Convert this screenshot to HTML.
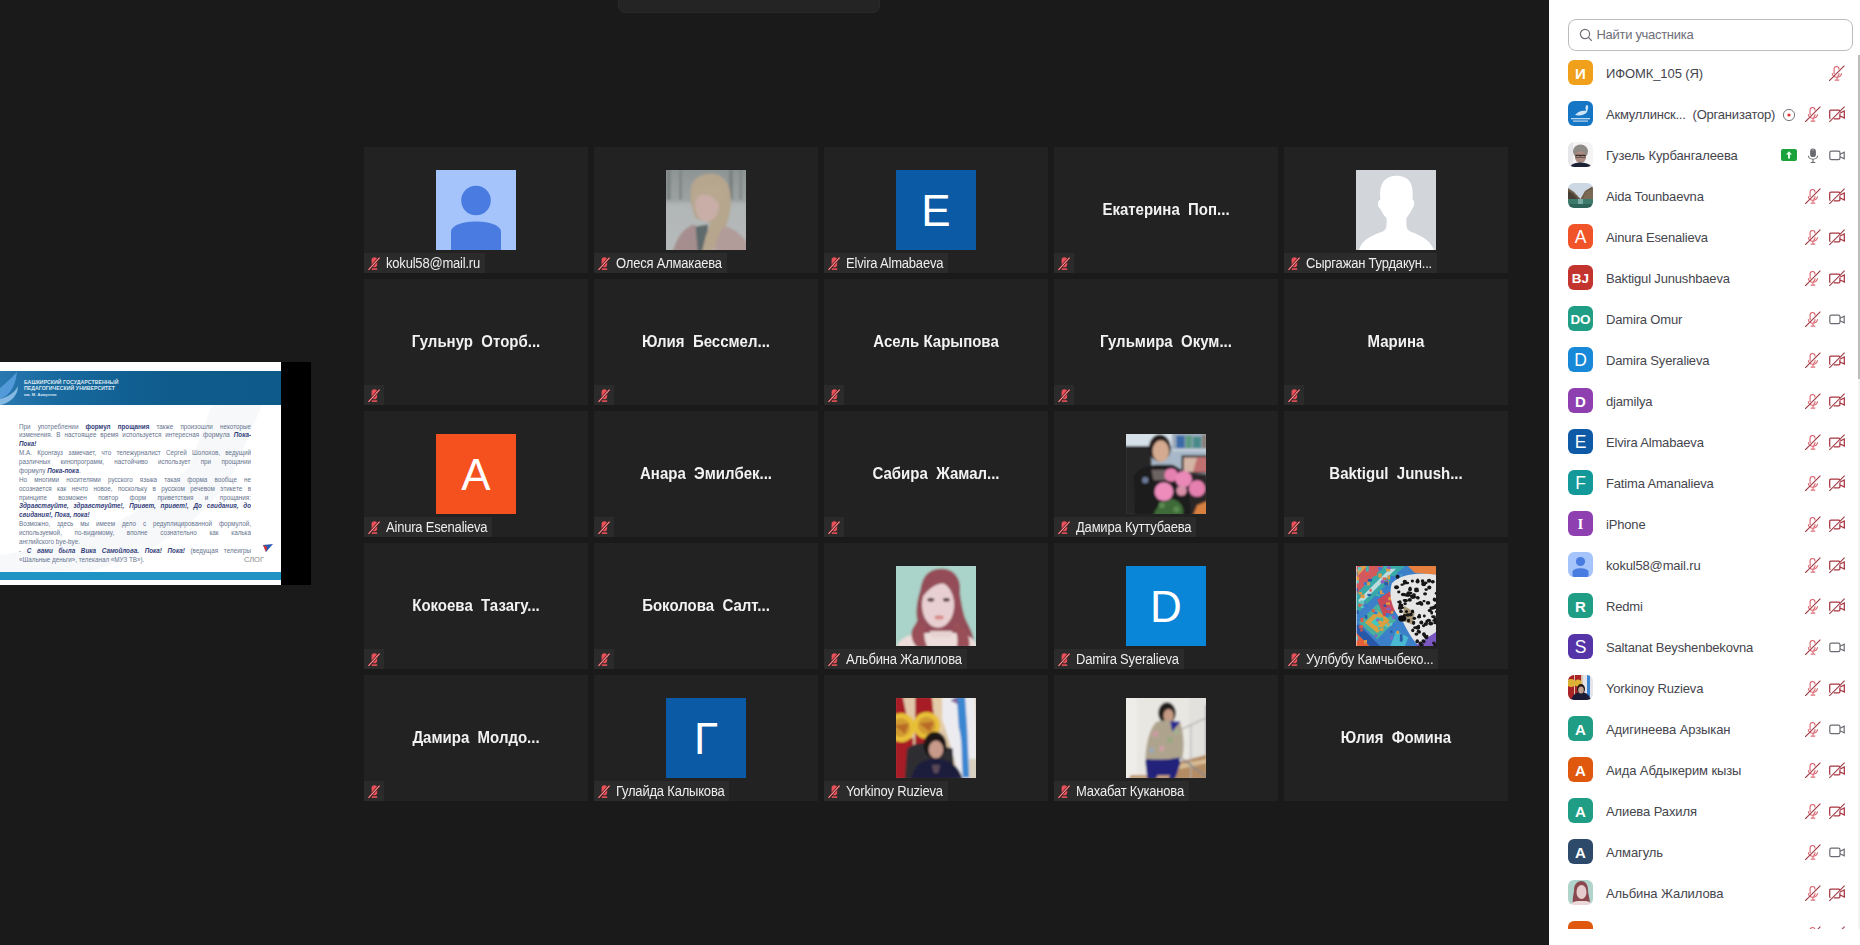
<!DOCTYPE html>
<html><head><meta charset="utf-8"><style>
*{margin:0;padding:0;box-sizing:border-box}
html,body{width:1860px;height:945px;overflow:hidden;background:#1a1a1a;font-family:"Liberation Sans",sans-serif}
.topbar{position:absolute;left:618px;top:-8px;width:262px;height:21px;border-radius:7px;background:#242424;border:1px solid #2a2a2a}
.tile{position:absolute;width:224px;height:126px;background:#222222}
.av{position:absolute;left:72px;top:23px;width:80px;height:80px;overflow:hidden;display:flex;align-items:center;justify-content:center;color:#fff}
.av span{line-height:1;margin-top:1px}
.lab{position:absolute;left:0;top:106px;height:20px;background:#2b2b2b;padding:0 5px 0 22px;display:flex;align-items:center}
.lab0{width:20px;padding:0}
.tmic{position:absolute;left:3px;top:3px}
.ln{color:#eeeeee;font-size:13px;letter-spacing:-0.2px;white-space:nowrap;position:relative;top:0px;display:inline-block;transform:scaleY(1.07);transform-origin:50% 70%}
.bn{position:absolute;left:0;top:0;width:224px;height:126px;display:flex;align-items:center;justify-content:center;color:#f2f2f2;font-weight:bold;font-size:15px;letter-spacing:0px;white-space:nowrap;padding-bottom:1px;transform:scaleY(1.06)}
.panel{position:absolute;left:1549px;top:0;width:311px;height:945px;background:#ffffff}
.search{position:absolute;left:19px;top:19px;width:285px;height:32px;border:1px solid #bcbcc0;border-radius:8px}
.search svg{position:absolute;left:10px;top:8px}
.search span{position:absolute;left:27.5px;top:7px;font-size:13px;letter-spacing:-0.3px;color:#6e6e78}
.list{position:absolute;left:0;top:52px;width:311px;height:877px;overflow:hidden}
.prow{position:absolute;left:19px;width:290px;height:25px;margin-top:-52px}
.pav{position:absolute;left:0;top:0;width:25px;height:25px;border-radius:6px;display:flex;align-items:center;justify-content:center;color:#fff;overflow:hidden}
.pav span{position:relative;top:0.5px}
.pname{position:absolute;left:38px;top:5.5px;font-size:13px;color:#45454d;white-space:nowrap}
.ic{position:absolute;top:5px}
.ic svg{display:block}
.sbar{position:absolute;left:1858px;top:55px;width:2px;height:324px;background:#bcbcbc}
.sbtrack{position:absolute;left:1858px;top:55px;width:2px;height:874px;background:#f4f4f4}
.share{position:absolute;left:0;top:362px;width:311px;height:223px;background:#000}
.slide{position:absolute;left:0;top:0;width:281px;height:223px;background:#fff;overflow:hidden}
.shead{position:absolute;left:0;top:9px;width:281px;height:34px;background:linear-gradient(90deg,#2a78b0 0%,#17699e 20%,#0f5b8c 60%,#0e5a8a 100%)}
.slogo{position:absolute;left:0;top:8px}
.sht{position:absolute;left:24px;color:#dce8f2;font-size:5.2px;line-height:5px;font-weight:bold;white-space:nowrap;letter-spacing:0.05px}
.sln{position:absolute;left:19px;width:232px;font-size:6.3px;line-height:8px;color:#66748f;white-space:nowrap;overflow:hidden}
.sln.j{text-align:justify;text-align-last:justify;white-space:normal;height:8px}
.sln b{color:#33407a}
.stri{position:absolute;left:263px;top:182px}
.slog{position:absolute;left:244px;top:193px;font-size:7.5px;color:#8a8a8a}
.sfoot{position:absolute;left:0;top:210px;width:281px;height:8px;background:#1f94c4}

#p_default{background:#d5d7db}
#p_olesya{background:linear-gradient(180deg,#8a8a88 0%,#a9a9a6 35%,#b6b4b0 60%,#b8a7a2 100%)}
#p_damira{background:linear-gradient(180deg,#c8d4da 0%,#5a6068 30%,#3a3234 60%,#4a3a3c 100%)}
#p_albina{background:#a8d4c8}
#p_ulbubu{background:#6f8aa0}
#p_yorkinoy{background:linear-gradient(90deg,#b0282a 0%,#c03a2a 45%,#e8e8f0 70%,#6080c0 85%,#d8d8e0 100%)}
#p_mahabat{background:linear-gradient(90deg,#e4e2dc 0%,#ebe9e5 60%,#d8d4cc 100%)}
#img_akm{background:#1573c0}
#img_guzel{background:#c4c0bc}
#img_aida{background:linear-gradient(180deg,#b8c8d8 0%,#7a6e5e 45%,#3e7e72 70%,#2d5e58 100%)}
#img_person{background:#a4c4fb}
#img_york{background:#8a3030}
#img_albina{background:#a8ccc4}
</style></head>
<body>
<svg width="0" height="0" style="position:absolute"><defs><filter id="phb" x="-10%" y="-10%" width="120%" height="120%"><feGaussianBlur stdDeviation="0.7"/></filter><filter id="phb2" x="-10%" y="-10%" width="120%" height="120%"><feGaussianBlur stdDeviation="0.35"/></filter></defs></svg>
<div class="topbar"></div>
<div class="share"><div class="slide"><svg style="position:absolute;left:0;top:43px" width="281" height="167" viewBox="0 0 281 167"><path d="M212 0 L262 0 L232 70 C200 120 150 150 90 166 L0 167 L0 150 C80 140 150 110 190 60 Z" fill="#eef1f6" opacity="0.5"/></svg><div class="shead"></div><svg class="slogo" width="22" height="36" viewBox="0 0 22 36"><path d="M-4 22 C4 14 12 8 17 2 C16 10 14 18 8 24 C4 28 -2 30 -4 30 Z" fill="#5aa0e0" opacity="0.85"/><path d="M-4 30 C6 28 14 24 18 16 C18 26 10 34 -4 36 Z" fill="#9ccaf0" opacity="0.8"/></svg><div class="sht" style="top:18px">БАШКИРСКИЙ ГОСУДАРСТВЕННЫЙ</div><div class="sht" style="top:24px">ПЕДАГОГИЧЕСКИЙ УНИВЕРСИТЕТ</div><div class="sht" style="top:30px;font-size:4px">им. М. Акмуллы</div><div class="sln j" style="top:60.5px">При употреблении <b>формул прощания</b> также произошли некоторые</div><div class="sln j" style="top:69.4px">изменения. В настоящее время используется интересная формула <b><i>Пока-</i></b></div><div class="sln" style="top:78.2px"><b><i>Пока!</i></b></div><div class="sln j" style="top:87.1px">М.А. Кронгауз замечает, что тележурналист Сергей Шолохов, ведущий</div><div class="sln j" style="top:96.0px">различных кинопрограмм, настойчиво использует при прощании</div><div class="sln" style="top:104.8px">формулу <b><i>Пока-пока</i></b>.</div><div class="sln j" style="top:113.7px">Но многими носителями русского языка такая форма вообще не</div><div class="sln j" style="top:122.6px">осознается как нечто новое, поскольку в русском речевом этикете в</div><div class="sln j" style="top:131.5px">принципе возможен повтор форм приветствия и прощания:</div><div class="sln j" style="top:140.3px"><b><i>Здравствуйте, здравствуйте!, Привет, привет!, До свидания, до</i></b></div><div class="sln" style="top:149.2px"><b><i>свидания!, Пока, пока!</i></b></div><div class="sln j" style="top:158.1px">Возможно, здесь мы имеем дело с редуплицированной формулой,</div><div class="sln j" style="top:166.9px">используемой, по-видимому, вполне сознательно как калька</div><div class="sln" style="top:175.8px">английского bye-bye.</div><div class="sln j" style="top:184.7px">- <b><i>С вами была Вика Самойлова. Пока! Пока!</i></b> (ведущая телеигры</div><div class="sln" style="top:193.5px">«Шальные деньги», телеканал «МУЗ ТВ»).</div><svg class="stri" width="10" height="9" viewBox="0 0 10 9"><path d="M0 1 L10 0 L3 8 Z" fill="#2a5bb0"/><path d="M0 1 L4 3 L3 8 Z" fill="#e03030"/></svg><div class="slog">СЛОГ</div><div class="sfoot"></div></div></div>
<div class="tile" style="left:364px;top:147px"><div class="av" style="background:#a4c4fb"><svg width="80" height="80" viewBox="0 0 80 80"><circle cx="40" cy="30.5" r="14.8" fill="#4a7be0"/><path d="M15 80 V62 C15 48 65 48 65 62 V80 Z" fill="#4a7be0"/></svg></div><div class="lab"><svg class="tmic" width="14" height="15" viewBox="0 0 14 15"><rect x="4.6" y="1.2" width="5.6" height="10" rx="2.8" fill="#e9505a"/><rect x="4.8" y="12.3" width="5.4" height="1.6" fill="#e9505a"/><line x1="1.5" y1="13.8" x2="12.6" y2="1.6" stroke="#5a1414" stroke-width="2.6"/><line x1="1.5" y1="13.8" x2="12.6" y2="1.6" stroke="#f09aa0" stroke-width="1.1"/></svg><span class="ln">kokul58@mail.ru</span></div></div><div class="tile" style="left:594px;top:147px"><div class="av ph"><svg width="80" height="80" viewBox="0 0 80 80" preserveAspectRatio="none"><defs><filter id="fb9" x="-10%" y="-10%" width="120%" height="120%"><feGaussianBlur stdDeviation="1.0"/></filter></defs><rect width="80" height="80" fill="#7e8484"/><g filter="url(#fb9)" transform="translate(-1.5 -1.5) scale(1.0375)"><defs><linearGradient id="og" x1="0" y1="0" x2="0" y2="1"><stop offset="0" stop-color="#8e9494"/><stop offset="0.38" stop-color="#9ca2a2"/><stop offset="0.44" stop-color="#b2b6b6"/><stop offset="1" stop-color="#b6baba"/></linearGradient></defs>
<rect width="80" height="80" fill="url(#og)"/>
<rect x="2" y="0" width="4" height="30" fill="#7e8484"/><rect x="14" y="0" width="3" height="30" fill="#828888"/><rect x="62" y="0" width="4" height="30" fill="#7c8282"/><rect x="72" y="0" width="3" height="30" fill="#848a8a"/>
<path d="M25 24 C25 10 34 5 46 5 C58 6 64 16 64 30 C64 44 60 56 54 68 L46 80 L34 80 C38 70 42 62 44 52 L30 48 C27 40 25 32 25 24 Z" fill="#b6a68e"/>
<ellipse cx="41" cy="36" rx="11.5" ry="15" fill="#c8aea6"/>
<path d="M27 26 C30 16 42 12 56 18 C58 26 56 32 52 34 C46 24 36 22 28 30 Z" fill="#b8a890"/>
<path d="M8 80 C12 66 18 58 28 54 L34 60 C38 66 40 74 38 80 Z" fill="#a68e8e"/>
<path d="M48 80 C50 70 52 62 58 56 C68 58 74 64 80 72 L80 80 Z" fill="#b29c9a"/>
<path d="M30 56 L42 54 L40 80 L32 80 Z" fill="#5e6a6c"/>
<path d="M40 64 C44 56 48 52 54 48 L52 60 L44 80 L36 80 Z" fill="#b6a68e"/></g></svg></div><div class="lab"><svg class="tmic" width="14" height="15" viewBox="0 0 14 15"><rect x="4.6" y="1.2" width="5.6" height="10" rx="2.8" fill="#e9505a"/><rect x="4.8" y="12.3" width="5.4" height="1.6" fill="#e9505a"/><line x1="1.5" y1="13.8" x2="12.6" y2="1.6" stroke="#5a1414" stroke-width="2.6"/><line x1="1.5" y1="13.8" x2="12.6" y2="1.6" stroke="#f09aa0" stroke-width="1.1"/></svg><span class="ln">Олеся Алмакаева</span></div></div><div class="tile" style="left:824px;top:147px"><div class="av" style="background:#0b5aa5"><span style="font-size:44px">E</span></div><div class="lab"><svg class="tmic" width="14" height="15" viewBox="0 0 14 15"><rect x="4.6" y="1.2" width="5.6" height="10" rx="2.8" fill="#e9505a"/><rect x="4.8" y="12.3" width="5.4" height="1.6" fill="#e9505a"/><line x1="1.5" y1="13.8" x2="12.6" y2="1.6" stroke="#5a1414" stroke-width="2.6"/><line x1="1.5" y1="13.8" x2="12.6" y2="1.6" stroke="#f09aa0" stroke-width="1.1"/></svg><span class="ln">Elvira Almabaeva</span></div></div><div class="tile" style="left:1054px;top:147px"><div class="bn">Екатерина&nbsp; Поп...</div><div class="lab lab0"><svg class="tmic" width="14" height="15" viewBox="0 0 14 15"><rect x="4.6" y="1.2" width="5.6" height="10" rx="2.8" fill="#e9505a"/><rect x="4.8" y="12.3" width="5.4" height="1.6" fill="#e9505a"/><line x1="1.5" y1="13.8" x2="12.6" y2="1.6" stroke="#5a1414" stroke-width="2.6"/><line x1="1.5" y1="13.8" x2="12.6" y2="1.6" stroke="#f09aa0" stroke-width="1.1"/></svg></div></div><div class="tile" style="left:1284px;top:147px"><div class="av ph"><svg width="80" height="80" viewBox="0 0 80 80" preserveAspectRatio="none"><defs><filter id="fb1" x="-10%" y="-10%" width="120%" height="120%"><feGaussianBlur stdDeviation="0.35"/></filter></defs><rect width="80" height="80" fill="#d2d5da"/><g filter="url(#fb1)" transform="translate(-1.5 -1.5) scale(1.0375)"><rect width="80" height="80" fill="#d2d5da"/><path d="M4 80 C6 70 14 66 24 62 C30 60 31 58 31 52 L31 48 C27 44 26 40 24 38 C22 36 22 30 25 30 C24 18 26 8 40 7 C54 7 57 16 56 30 C58 30 58 36 56 38 C55 40 53 44 50 48 L50 52 C50 58 51 60 57 62 C66 66 74 70 77 80 Z" fill="#ffffff"/></g></svg></div><div class="lab"><svg class="tmic" width="14" height="15" viewBox="0 0 14 15"><rect x="4.6" y="1.2" width="5.6" height="10" rx="2.8" fill="#e9505a"/><rect x="4.8" y="12.3" width="5.4" height="1.6" fill="#e9505a"/><line x1="1.5" y1="13.8" x2="12.6" y2="1.6" stroke="#5a1414" stroke-width="2.6"/><line x1="1.5" y1="13.8" x2="12.6" y2="1.6" stroke="#f09aa0" stroke-width="1.1"/></svg><span class="ln">Сыргажан Турдакун...</span></div></div><div class="tile" style="left:364px;top:279px"><div class="bn">Гульнур&nbsp; Оторб...</div><div class="lab lab0"><svg class="tmic" width="14" height="15" viewBox="0 0 14 15"><rect x="4.6" y="1.2" width="5.6" height="10" rx="2.8" fill="#e9505a"/><rect x="4.8" y="12.3" width="5.4" height="1.6" fill="#e9505a"/><line x1="1.5" y1="13.8" x2="12.6" y2="1.6" stroke="#5a1414" stroke-width="2.6"/><line x1="1.5" y1="13.8" x2="12.6" y2="1.6" stroke="#f09aa0" stroke-width="1.1"/></svg></div></div><div class="tile" style="left:594px;top:279px"><div class="bn">Юлия&nbsp; Бессмел...</div><div class="lab lab0"><svg class="tmic" width="14" height="15" viewBox="0 0 14 15"><rect x="4.6" y="1.2" width="5.6" height="10" rx="2.8" fill="#e9505a"/><rect x="4.8" y="12.3" width="5.4" height="1.6" fill="#e9505a"/><line x1="1.5" y1="13.8" x2="12.6" y2="1.6" stroke="#5a1414" stroke-width="2.6"/><line x1="1.5" y1="13.8" x2="12.6" y2="1.6" stroke="#f09aa0" stroke-width="1.1"/></svg></div></div><div class="tile" style="left:824px;top:279px"><div class="bn">Асель Карыпова</div><div class="lab lab0"><svg class="tmic" width="14" height="15" viewBox="0 0 14 15"><rect x="4.6" y="1.2" width="5.6" height="10" rx="2.8" fill="#e9505a"/><rect x="4.8" y="12.3" width="5.4" height="1.6" fill="#e9505a"/><line x1="1.5" y1="13.8" x2="12.6" y2="1.6" stroke="#5a1414" stroke-width="2.6"/><line x1="1.5" y1="13.8" x2="12.6" y2="1.6" stroke="#f09aa0" stroke-width="1.1"/></svg></div></div><div class="tile" style="left:1054px;top:279px"><div class="bn">Гульмира&nbsp; Окум...</div><div class="lab lab0"><svg class="tmic" width="14" height="15" viewBox="0 0 14 15"><rect x="4.6" y="1.2" width="5.6" height="10" rx="2.8" fill="#e9505a"/><rect x="4.8" y="12.3" width="5.4" height="1.6" fill="#e9505a"/><line x1="1.5" y1="13.8" x2="12.6" y2="1.6" stroke="#5a1414" stroke-width="2.6"/><line x1="1.5" y1="13.8" x2="12.6" y2="1.6" stroke="#f09aa0" stroke-width="1.1"/></svg></div></div><div class="tile" style="left:1284px;top:279px"><div class="bn">Марина</div><div class="lab lab0"><svg class="tmic" width="14" height="15" viewBox="0 0 14 15"><rect x="4.6" y="1.2" width="5.6" height="10" rx="2.8" fill="#e9505a"/><rect x="4.8" y="12.3" width="5.4" height="1.6" fill="#e9505a"/><line x1="1.5" y1="13.8" x2="12.6" y2="1.6" stroke="#5a1414" stroke-width="2.6"/><line x1="1.5" y1="13.8" x2="12.6" y2="1.6" stroke="#f09aa0" stroke-width="1.1"/></svg></div></div><div class="tile" style="left:364px;top:411px"><div class="av" style="background:#f4511e"><span style="font-size:44px">A</span></div><div class="lab"><svg class="tmic" width="14" height="15" viewBox="0 0 14 15"><rect x="4.6" y="1.2" width="5.6" height="10" rx="2.8" fill="#e9505a"/><rect x="4.8" y="12.3" width="5.4" height="1.6" fill="#e9505a"/><line x1="1.5" y1="13.8" x2="12.6" y2="1.6" stroke="#5a1414" stroke-width="2.6"/><line x1="1.5" y1="13.8" x2="12.6" y2="1.6" stroke="#f09aa0" stroke-width="1.1"/></svg><span class="ln">Ainura Esenalieva</span></div></div><div class="tile" style="left:594px;top:411px"><div class="bn">Анара&nbsp; Эмилбек...</div><div class="lab lab0"><svg class="tmic" width="14" height="15" viewBox="0 0 14 15"><rect x="4.6" y="1.2" width="5.6" height="10" rx="2.8" fill="#e9505a"/><rect x="4.8" y="12.3" width="5.4" height="1.6" fill="#e9505a"/><line x1="1.5" y1="13.8" x2="12.6" y2="1.6" stroke="#5a1414" stroke-width="2.6"/><line x1="1.5" y1="13.8" x2="12.6" y2="1.6" stroke="#f09aa0" stroke-width="1.1"/></svg></div></div><div class="tile" style="left:824px;top:411px"><div class="bn">Сабира&nbsp; Жамал...</div><div class="lab lab0"><svg class="tmic" width="14" height="15" viewBox="0 0 14 15"><rect x="4.6" y="1.2" width="5.6" height="10" rx="2.8" fill="#e9505a"/><rect x="4.8" y="12.3" width="5.4" height="1.6" fill="#e9505a"/><line x1="1.5" y1="13.8" x2="12.6" y2="1.6" stroke="#5a1414" stroke-width="2.6"/><line x1="1.5" y1="13.8" x2="12.6" y2="1.6" stroke="#f09aa0" stroke-width="1.1"/></svg></div></div><div class="tile" style="left:1054px;top:411px"><div class="av ph"><svg width="80" height="80" viewBox="0 0 80 80" preserveAspectRatio="none"><defs><filter id="fb3" x="-10%" y="-10%" width="120%" height="120%"><feGaussianBlur stdDeviation="1.0"/></filter></defs><rect width="80" height="80" fill="#a8b8c8"/><g filter="url(#fb3)" transform="translate(-1.5 -1.5) scale(1.0375)"><rect width="80" height="80" fill="#a8b8c8"/>
<rect x="0" y="0" width="46" height="13" fill="#d6e0e8"/>
<rect x="46" y="0" width="34" height="16" fill="#9cacbc"/>
<rect x="50" y="3" width="8" height="12" fill="#3a6aa8"/><rect x="59" y="3" width="6" height="12" fill="#5a9a80"/><rect x="66" y="4" width="8" height="11" fill="#4a8a8a"/><rect x="75" y="2" width="4" height="13" fill="#8a7a70"/>
<rect x="46" y="16" width="34" height="2" fill="#c8d2dc"/>
<rect x="55" y="22" width="25" height="17" fill="#2a2a2e"/><rect x="57" y="24" width="23" height="14" fill="#d4b4a4"/><path d="M70 24 L80 24 L80 38 L66 38 Z" fill="#c07070"/>
<path d="M0 13 L26 13 L26 80 L0 80 Z" fill="#262628"/>
<path d="M48 38 L80 40 L80 80 L48 80 Z" fill="#2a2628"/>
<path d="M10 80 L9 42 C14 34 22 32 30 31 L46 31 C54 34 60 40 62 50 L64 80 Z" fill="#1c1a1e"/>
<ellipse cx="34" cy="15" rx="10.5" ry="13" fill="#241c1c"/>
<ellipse cx="35" cy="18" rx="8" ry="10.5" fill="#d4aa90"/>
<path d="M26 36 L44 36 L42 46 L28 46 Z" fill="#6e6464"/>
<circle cx="20" cy="46" r="3" fill="#6a7a9a"/>
<circle cx="45" cy="41" r="6.5" fill="#e680b0"/><circle cx="57" cy="45" r="8" fill="#ea88b8"/><circle cx="70" cy="54" r="8" fill="#e680b0"/>
<circle cx="38" cy="57" r="9" fill="#ee8cbc"/><circle cx="55" cy="56" r="5" fill="#d890a8"/>
<path d="M28 80 C30 72 36 66 46 64 C54 66 58 72 56 80 Z" fill="#3e6a38"/><circle cx="36" cy="70" r="3" fill="#5a8a50"/><circle cx="50" cy="74" r="3" fill="#5a8a50"/>
<path d="M70 70 L80 66 L80 80 L66 80 Z" fill="#d88040"/></g></svg></div><div class="lab"><svg class="tmic" width="14" height="15" viewBox="0 0 14 15"><rect x="4.6" y="1.2" width="5.6" height="10" rx="2.8" fill="#e9505a"/><rect x="4.8" y="12.3" width="5.4" height="1.6" fill="#e9505a"/><line x1="1.5" y1="13.8" x2="12.6" y2="1.6" stroke="#5a1414" stroke-width="2.6"/><line x1="1.5" y1="13.8" x2="12.6" y2="1.6" stroke="#f09aa0" stroke-width="1.1"/></svg><span class="ln">Дамира Куттубаева</span></div></div><div class="tile" style="left:1284px;top:411px"><div class="bn">Baktigul&nbsp; Junush...</div><div class="lab lab0"><svg class="tmic" width="14" height="15" viewBox="0 0 14 15"><rect x="4.6" y="1.2" width="5.6" height="10" rx="2.8" fill="#e9505a"/><rect x="4.8" y="12.3" width="5.4" height="1.6" fill="#e9505a"/><line x1="1.5" y1="13.8" x2="12.6" y2="1.6" stroke="#5a1414" stroke-width="2.6"/><line x1="1.5" y1="13.8" x2="12.6" y2="1.6" stroke="#f09aa0" stroke-width="1.1"/></svg></div></div><div class="tile" style="left:364px;top:543px"><div class="bn">Кокоева&nbsp; Тазагу...</div><div class="lab lab0"><svg class="tmic" width="14" height="15" viewBox="0 0 14 15"><rect x="4.6" y="1.2" width="5.6" height="10" rx="2.8" fill="#e9505a"/><rect x="4.8" y="12.3" width="5.4" height="1.6" fill="#e9505a"/><line x1="1.5" y1="13.8" x2="12.6" y2="1.6" stroke="#5a1414" stroke-width="2.6"/><line x1="1.5" y1="13.8" x2="12.6" y2="1.6" stroke="#f09aa0" stroke-width="1.1"/></svg></div></div><div class="tile" style="left:594px;top:543px"><div class="bn">Боколова&nbsp; Салт...</div><div class="lab lab0"><svg class="tmic" width="14" height="15" viewBox="0 0 14 15"><rect x="4.6" y="1.2" width="5.6" height="10" rx="2.8" fill="#e9505a"/><rect x="4.8" y="12.3" width="5.4" height="1.6" fill="#e9505a"/><line x1="1.5" y1="13.8" x2="12.6" y2="1.6" stroke="#5a1414" stroke-width="2.6"/><line x1="1.5" y1="13.8" x2="12.6" y2="1.6" stroke="#f09aa0" stroke-width="1.1"/></svg></div></div><div class="tile" style="left:824px;top:543px"><div class="av ph"><svg width="80" height="80" viewBox="0 0 80 80" preserveAspectRatio="none"><defs><filter id="fb8" x="-10%" y="-10%" width="120%" height="120%"><feGaussianBlur stdDeviation="1.0"/></filter></defs><rect width="80" height="80" fill="#aad3c9"/><g filter="url(#fb8)" transform="translate(-1.5 -1.5) scale(1.0375)"><rect width="80" height="80" fill="#aad3c9"/>
<path d="M18 80 C14 70 18 62 22 54 C20 44 22 34 25 24 C27 10 34 4 45 4 C58 4 65 14 63 28 C65 40 66 48 70 56 C74 64 78 72 76 80 Z" fill="#944e58"/>
<path d="M2 80 C4 72 12 68 22 66 L62 66 C72 68 78 72 80 80 Z" fill="#ecdcda"/>
<path d="M20 58 C14 64 16 74 22 80 L32 80 C28 72 28 64 30 58 Z" fill="#9a5058"/>
<path d="M60 56 C68 62 74 70 72 80 L60 80 C62 72 60 64 56 58 Z" fill="#9a5058"/>
<ellipse cx="42" cy="39" rx="15.5" ry="22" fill="#e8d0d2"/>
<path d="M27 26 C31 12 52 8 60 22 C54 16 40 15 28 30 Z" fill="#944e58"/>
<ellipse cx="35" cy="34" rx="3.4" ry="1.7" fill="#4a2a30"/><ellipse cx="50" cy="34" rx="3.4" ry="1.7" fill="#4a2a30"/>
<ellipse cx="43" cy="51" rx="4.5" ry="2" fill="#d88a88"/>
<path d="M34 64 L56 64 L54 70 L36 70 Z" fill="#e6d2d0"/></g></svg></div><div class="lab"><svg class="tmic" width="14" height="15" viewBox="0 0 14 15"><rect x="4.6" y="1.2" width="5.6" height="10" rx="2.8" fill="#e9505a"/><rect x="4.8" y="12.3" width="5.4" height="1.6" fill="#e9505a"/><line x1="1.5" y1="13.8" x2="12.6" y2="1.6" stroke="#5a1414" stroke-width="2.6"/><line x1="1.5" y1="13.8" x2="12.6" y2="1.6" stroke="#f09aa0" stroke-width="1.1"/></svg><span class="ln">Альбина Жалилова</span></div></div><div class="tile" style="left:1054px;top:543px"><div class="av" style="background:#0a86d8"><span style="font-size:44px">D</span></div><div class="lab"><svg class="tmic" width="14" height="15" viewBox="0 0 14 15"><rect x="4.6" y="1.2" width="5.6" height="10" rx="2.8" fill="#e9505a"/><rect x="4.8" y="12.3" width="5.4" height="1.6" fill="#e9505a"/><line x1="1.5" y1="13.8" x2="12.6" y2="1.6" stroke="#5a1414" stroke-width="2.6"/><line x1="1.5" y1="13.8" x2="12.6" y2="1.6" stroke="#f09aa0" stroke-width="1.1"/></svg><span class="ln">Damira Syeralieva</span></div></div><div class="tile" style="left:1284px;top:543px"><div class="av ph"><svg width="80" height="80" viewBox="0 0 80 80" preserveAspectRatio="none"><defs><filter id="fb5" x="-10%" y="-10%" width="120%" height="120%"><feGaussianBlur stdDeviation="0.45"/></filter></defs><rect width="80" height="80" fill="#3a80c8"/><g filter="url(#fb5)" transform="translate(-1.5 -1.5) scale(1.0375)"><rect width="80" height="80" fill="#3a80c8"/>
<path d="M0 0 L30 0 L0 30 Z" fill="#d05a60"/>
<path d="M0 8 L8 0 L14 0 L0 14 Z" fill="#e0a050"/>
<path d="M30 0 L50 0 L0 50 L0 30 Z" fill="#38a8a8"/>
<path d="M34 4 L40 4 L4 40 L4 34 Z" fill="#f2f2f2" opacity="0.7"/>
<path d="M4 56 L22 38 L40 54 L22 72 Z" fill="#48b0a0"/><path d="M10 56 L22 44 L34 54 L22 66 Z" fill="#d8a040"/><path d="M16 56 L22 50 L28 54 L22 60 Z" fill="#40c8c0"/>
<path d="M0 64 L16 80 L0 80 Z" fill="#e86038"/>
<path d="M0 58 L4 58 L26 80 L16 80 L0 64 Z" fill="#2a58a8"/>
<path d="M22 34 L34 26 L40 46 L28 50 Z" fill="#c84858"/>
<path d="M50 0 L80 0 L80 10 L58 8 Z" fill="#e88040"/>
<path d="M40 64 L52 70 L48 80 L34 80 Z" fill="#48b8d0"/>
<rect x="19.9" y="44.8" width="2.9" height="3.0" fill="#60c8c0"/><rect x="25.8" y="14.8" width="3.0" height="3.2" fill="#8a60c0"/><rect x="8.2" y="35.7" width="2.2" height="3.6" fill="#3a7ad0"/><rect x="30.5" y="3.4" width="3.9" height="3.3" fill="#e09a40"/><rect x="27.1" y="12.6" width="3.7" height="2.1" fill="#e05a48"/><rect x="1.6" y="70.4" width="2.1" height="2.9" fill="#8a60c0"/><rect x="19.4" y="67.4" width="2.5" height="2.6" fill="#8a60c0"/><rect x="0.2" y="6.8" width="2.6" height="4.0" fill="#2a5aa8"/><rect x="43.8" y="67.2" width="2.5" height="3.5" fill="#2a5aa8"/><rect x="22.6" y="2.4" width="3.5" height="2.8" fill="#8a60c0"/><rect x="37.2" y="30.9" width="3.7" height="2.0" fill="#e05a48"/><rect x="9.2" y="72.8" width="2.8" height="3.4" fill="#e09a40"/><rect x="18.5" y="45.3" width="3.6" height="2.5" fill="#3a7ad0"/><rect x="3.8" y="26.6" width="3.5" height="2.2" fill="#e09a40"/><rect x="10.8" y="8.1" width="2.9" height="3.0" fill="#e05a48"/><rect x="30.0" y="15.1" width="2.4" height="3.5" fill="#8a60c0"/><rect x="5.8" y="51.5" width="2.8" height="4.0" fill="#e05a48"/><rect x="0.0" y="69.1" width="3.2" height="4.0" fill="#60c8c0"/><rect x="0.9" y="15.0" width="3.2" height="3.2" fill="#60c8c0"/><rect x="1.9" y="11.7" width="2.5" height="3.5" fill="#e09a40"/><rect x="14.5" y="23.7" width="2.1" height="2.4" fill="#e05a48"/><rect x="28.0" y="1.2" width="2.7" height="2.9" fill="#40b8b0"/><rect x="25.3" y="69.3" width="3.3" height="2.6" fill="#3a7ad0"/><rect x="10.0" y="48.8" width="2.4" height="3.5" fill="#2a5aa8"/><rect x="41.4" y="15.7" width="3.8" height="3.2" fill="#e09a40"/><rect x="18.5" y="8.3" width="3.0" height="2.5" fill="#e05a48"/><rect x="32.6" y="31.3" width="3.6" height="3.2" fill="#e09a40"/><rect x="12.9" y="14.0" width="4.0" height="2.3" fill="#2a5aa8"/><rect x="21.1" y="52.3" width="3.2" height="2.6" fill="#8a60c0"/><rect x="40.4" y="16.3" width="2.1" height="2.8" fill="#e05a48"/><rect x="11.0" y="3.7" width="2.7" height="3.1" fill="#40b8b0"/><rect x="5.8" y="29.0" width="4.0" height="3.3" fill="#e09a40"/><rect x="30.4" y="46.8" width="3.2" height="3.8" fill="#3a7ad0"/><rect x="20.9" y="28.6" width="3.9" height="2.0" fill="#40b8b0"/><rect x="28.0" y="38.6" width="2.6" height="2.3" fill="#2a5aa8"/><rect x="3.2" y="36.2" width="3.5" height="3.8" fill="#40b8b0"/><rect x="32.4" y="56.3" width="3.9" height="2.7" fill="#60c8c0"/><rect x="3.7" y="37.9" width="3.7" height="2.8" fill="#e05a48"/><rect x="34.8" y="69.1" width="2.0" height="3.3" fill="#8a60c0"/><rect x="16.7" y="1.0" width="2.2" height="3.3" fill="#e05a48"/><rect x="43.7" y="70.4" width="2.7" height="3.9" fill="#2a5aa8"/><rect x="30.5" y="36.6" width="3.7" height="2.2" fill="#e09a40"/><rect x="33.0" y="2.4" width="2.2" height="2.0" fill="#8a60c0"/><rect x="42.1" y="9.0" width="3.2" height="3.8" fill="#60c8c0"/><rect x="11.3" y="0.9" width="2.3" height="3.2" fill="#40b8b0"/><rect x="22.8" y="60.3" width="3.3" height="2.9" fill="#40b8b0"/><rect x="29.3" y="15.9" width="3.6" height="3.5" fill="#e09a40"/><rect x="8.8" y="17.1" width="3.2" height="2.6" fill="#3a7ad0"/><rect x="6.0" y="39.7" width="3.8" height="2.1" fill="#60c8c0"/><rect x="2.8" y="78.4" width="2.3" height="2.9" fill="#60c8c0"/><rect x="12.1" y="17.1" width="2.8" height="3.0" fill="#e09a40"/><rect x="29.6" y="57.3" width="4.0" height="2.9" fill="#60c8c0"/><rect x="3.3" y="2.5" width="3.2" height="3.4" fill="#60c8c0"/><rect x="12.4" y="28.3" width="3.6" height="2.0" fill="#2a5aa8"/><rect x="6.0" y="36.4" width="3.5" height="2.5" fill="#e05a48"/><rect x="34.3" y="63.7" width="2.2" height="2.2" fill="#2a5aa8"/><rect x="23.6" y="51.2" width="3.9" height="3.4" fill="#40b8b0"/><rect x="8.8" y="38.0" width="3.4" height="3.5" fill="#3a7ad0"/><rect x="23.5" y="2.9" width="2.5" height="2.7" fill="#3a7ad0"/><rect x="30.7" y="41.6" width="4.0" height="2.3" fill="#8a60c0"/><rect x="37.3" y="56.0" width="2.2" height="3.9" fill="#3a7ad0"/><rect x="31.8" y="10.4" width="2.4" height="3.8" fill="#e09a40"/><rect x="0.3" y="44.0" width="3.8" height="3.6" fill="#2a5aa8"/><rect x="28.7" y="16.4" width="3.7" height="3.6" fill="#2a5aa8"/><rect x="40.7" y="9.9" width="3.8" height="4.0" fill="#3a7ad0"/><rect x="43.0" y="43.0" width="3.9" height="2.5" fill="#60c8c0"/><rect x="31.6" y="1.3" width="2.2" height="2.9" fill="#8a60c0"/><rect x="24.2" y="61.5" width="3.8" height="2.4" fill="#e09a40"/><rect x="38.2" y="34.3" width="2.3" height="2.7" fill="#e05a48"/><rect x="34.7" y="11.2" width="4.0" height="3.8" fill="#3a7ad0"/><rect x="22.8" y="54.2" width="3.9" height="3.0" fill="#e09a40"/><rect x="41.8" y="6.9" width="2.9" height="3.1" fill="#3a7ad0"/><rect x="36.6" y="44.9" width="3.0" height="3.7" fill="#3a7ad0"/><rect x="24.6" y="24.9" width="3.9" height="3.7" fill="#e09a40"/><rect x="26.8" y="24.4" width="3.9" height="3.0" fill="#3a7ad0"/><rect x="25.2" y="16.1" width="2.2" height="2.0" fill="#8a60c0"/><rect x="16.6" y="43.1" width="3.0" height="2.8" fill="#e05a48"/><rect x="35.2" y="45.0" width="2.2" height="2.3" fill="#e09a40"/><rect x="40.5" y="64.0" width="2.5" height="2.9" fill="#e09a40"/><rect x="5.6" y="34.7" width="3.9" height="3.8" fill="#60c8c0"/><rect x="23.1" y="8.7" width="3.2" height="3.9" fill="#e09a40"/><rect x="5.7" y="62.3" width="2.1" height="2.3" fill="#e05a48"/><rect x="0.5" y="22.7" width="2.7" height="3.2" fill="#2a5aa8"/><rect x="4.6" y="58.5" width="3.7" height="3.2" fill="#e05a48"/><rect x="31.6" y="56.1" width="2.0" height="3.3" fill="#e09a40"/><rect x="36.3" y="49.3" width="2.4" height="3.3" fill="#8a60c0"/>
<path d="M36 18 C46 8 64 8 80 10 L80 80 L64 80 C56 74 50 62 46 54 C38 46 32 32 36 18 Z" fill="#e6e6e6"/>
<path d="M56 80 L80 64 L80 80 Z" fill="#7a58c0"/>
<path d="M48 40 L58 46 L56 58 L46 54 Z" fill="#a89878"/>
<ellipse cx="61.1" cy="60.9" rx="2.2" ry="2.0" fill="#141414"/><ellipse cx="67.0" cy="74.3" rx="1.4" ry="1.6" fill="#141414"/><ellipse cx="77.2" cy="54.0" rx="2.3" ry="1.3" fill="#141414"/><ellipse cx="53.5" cy="24.2" rx="1.9" ry="1.7" fill="#141414"/><ellipse cx="68.3" cy="17.8" rx="2.2" ry="1.3" fill="#141414"/><ellipse cx="60.9" cy="15.4" rx="1.4" ry="1.9" fill="#141414"/><ellipse cx="40.5" cy="21.9" rx="2.4" ry="1.9" fill="#141414"/><ellipse cx="57.0" cy="56.2" rx="1.6" ry="2.0" fill="#141414"/><ellipse cx="64.5" cy="77.5" rx="2.3" ry="1.4" fill="#141414"/><ellipse cx="48.1" cy="18.3" rx="1.5" ry="1.3" fill="#141414"/><ellipse cx="46.9" cy="28.9" rx="2.2" ry="1.6" fill="#141414"/><ellipse cx="45.8" cy="41.6" rx="2.1" ry="1.2" fill="#141414"/><ellipse cx="67.5" cy="68.5" rx="1.4" ry="1.8" fill="#141414"/><ellipse cx="48.3" cy="48.8" rx="1.4" ry="1.2" fill="#141414"/><ellipse cx="76.5" cy="75.7" rx="1.7" ry="1.5" fill="#141414"/><ellipse cx="56.2" cy="63.4" rx="1.5" ry="1.8" fill="#141414"/><ellipse cx="69.9" cy="69.6" rx="1.4" ry="2.0" fill="#141414"/><ellipse cx="60.5" cy="73.9" rx="1.7" ry="1.9" fill="#141414"/><ellipse cx="57.3" cy="29.1" rx="1.7" ry="1.3" fill="#141414"/><ellipse cx="64.5" cy="79.8" rx="1.6" ry="1.2" fill="#141414"/><ellipse cx="79.3" cy="45.5" rx="1.8" ry="1.4" fill="#141414"/><ellipse cx="59.7" cy="67.1" rx="1.9" ry="1.5" fill="#141414"/><ellipse cx="71.9" cy="15.7" rx="2.1" ry="2.0" fill="#141414"/><ellipse cx="61.5" cy="64.3" rx="1.5" ry="1.5" fill="#141414"/><ellipse cx="44.7" cy="39.5" rx="2.4" ry="1.9" fill="#141414"/><ellipse cx="78.8" cy="39.6" rx="1.9" ry="1.8" fill="#141414"/><ellipse cx="54.0" cy="27.5" rx="1.8" ry="1.3" fill="#141414"/><ellipse cx="78.0" cy="52.4" rx="1.9" ry="1.5" fill="#141414"/><ellipse cx="69.1" cy="70.2" rx="1.8" ry="1.8" fill="#141414"/><ellipse cx="68.7" cy="57.4" rx="2.1" ry="1.8" fill="#141414"/><ellipse cx="44.0" cy="41.9" rx="2.2" ry="1.8" fill="#141414"/><ellipse cx="62.5" cy="49.0" rx="1.4" ry="1.6" fill="#141414"/><ellipse cx="62.4" cy="65.0" rx="1.7" ry="1.7" fill="#141414"/><ellipse cx="66.9" cy="67.3" rx="1.8" ry="1.9" fill="#141414"/><ellipse cx="73.5" cy="56.9" rx="2.4" ry="2.0" fill="#141414"/><ellipse cx="55.9" cy="45.2" rx="1.6" ry="1.9" fill="#141414"/><ellipse cx="76.9" cy="41.3" rx="2.1" ry="1.8" fill="#141414"/><ellipse cx="66.5" cy="18.7" rx="2.2" ry="1.7" fill="#141414"/><ellipse cx="63.3" cy="37.1" rx="2.0" ry="1.8" fill="#141414"/><ellipse cx="61.8" cy="59.3" rx="1.4" ry="1.3" fill="#141414"/><ellipse cx="52.1" cy="54.1" rx="1.6" ry="1.7" fill="#141414"/><ellipse cx="53.6" cy="22.7" rx="1.5" ry="1.3" fill="#141414"/><ellipse cx="45.9" cy="19.4" rx="1.6" ry="1.2" fill="#141414"/><ellipse cx="53.3" cy="34.1" rx="2.0" ry="1.7" fill="#141414"/><ellipse cx="43.9" cy="36.3" rx="1.5" ry="1.9" fill="#141414"/><ellipse cx="57.3" cy="31.1" rx="2.0" ry="2.0" fill="#141414"/><ellipse cx="70.9" cy="37.0" rx="2.2" ry="1.7" fill="#141414"/><ellipse cx="48.5" cy="16.5" rx="2.0" ry="1.7" fill="#141414"/><ellipse cx="77.9" cy="77.6" rx="2.0" ry="1.5" fill="#141414"/><ellipse cx="60.8" cy="16.4" rx="2.0" ry="1.9" fill="#141414"/><ellipse cx="48.8" cy="37.9" rx="1.6" ry="1.4" fill="#141414"/><ellipse cx="78.6" cy="34.1" rx="2.4" ry="1.9" fill="#141414"/><ellipse cx="59.8" cy="25.2" rx="2.4" ry="1.6" fill="#141414"/><ellipse cx="50.8" cy="29.6" rx="2.4" ry="1.6" fill="#141414"/><ellipse cx="44.3" cy="41.3" rx="1.5" ry="1.7" fill="#141414"/><ellipse cx="52.2" cy="27.7" rx="2.2" ry="1.9" fill="#141414"/><ellipse cx="69.1" cy="24.2" rx="1.7" ry="1.3" fill="#141414"/><ellipse cx="79.4" cy="27.7" rx="2.0" ry="1.6" fill="#141414"/><ellipse cx="62.2" cy="50.7" rx="2.1" ry="1.3" fill="#141414"/><ellipse cx="68.0" cy="28.3" rx="1.9" ry="1.5" fill="#141414"/><ellipse cx="44.8" cy="45.2" rx="1.9" ry="1.5" fill="#141414"/><ellipse cx="67.3" cy="49.7" rx="1.4" ry="1.4" fill="#141414"/><ellipse cx="74.4" cy="46.4" rx="1.4" ry="1.8" fill="#141414"/><ellipse cx="51.4" cy="48.6" rx="2.1" ry="1.7" fill="#141414"/><ellipse cx="49.3" cy="35.0" rx="2.3" ry="1.4" fill="#141414"/><ellipse cx="64.7" cy="38.0" rx="1.7" ry="1.8" fill="#141414"/><ellipse cx="75.5" cy="16.6" rx="1.9" ry="1.6" fill="#141414"/><ellipse cx="54.9" cy="30.5" rx="1.6" ry="1.7" fill="#141414"/><ellipse cx="69.6" cy="55.1" rx="1.4" ry="1.8" fill="#141414"/><ellipse cx="78.9" cy="79.9" rx="2.1" ry="1.2" fill="#141414"/><ellipse cx="72.1" cy="22.2" rx="2.0" ry="2.0" fill="#141414"/><ellipse cx="65.6" cy="16.0" rx="1.7" ry="1.9" fill="#141414"/><ellipse cx="50.7" cy="17.9" rx="2.0" ry="1.2" fill="#141414"/><ellipse cx="58.8" cy="60.9" rx="2.3" ry="1.3" fill="#141414"/><ellipse cx="51.6" cy="29.3" rx="2.0" ry="1.6" fill="#141414"/><ellipse cx="76.9" cy="33.7" rx="1.5" ry="1.8" fill="#141414"/><ellipse cx="57.7" cy="51.9" rx="1.7" ry="1.6" fill="#141414"/><ellipse cx="55.8" cy="15.9" rx="1.6" ry="1.5" fill="#141414"/><ellipse cx="66.8" cy="19.3" rx="2.1" ry="1.7" fill="#141414"/><ellipse cx="59.7" cy="23.7" rx="2.3" ry="1.6" fill="#141414"/><ellipse cx="77.6" cy="56.4" rx="1.6" ry="1.3" fill="#141414"/><ellipse cx="78.6" cy="55.2" rx="2.2" ry="1.3" fill="#141414"/><ellipse cx="61.2" cy="32.2" rx="1.6" ry="1.5" fill="#141414"/><ellipse cx="60.7" cy="31.8" rx="1.8" ry="1.3" fill="#141414"/><ellipse cx="71.6" cy="53.9" rx="2.2" ry="1.5" fill="#141414"/><ellipse cx="72.6" cy="44.3" rx="2.0" ry="1.7" fill="#141414"/><ellipse cx="67.0" cy="35.3" rx="1.5" ry="1.2" fill="#141414"/><ellipse cx="74.5" cy="41.6" rx="2.2" ry="1.2" fill="#141414"/><ellipse cx="61.0" cy="37.7" rx="1.9" ry="1.3" fill="#141414"/><ellipse cx="48.7" cy="34.5" rx="2.3" ry="1.3" fill="#141414"/><ellipse cx="42.7" cy="26.5" rx="1.6" ry="1.4" fill="#141414"/><ellipse cx="64.4" cy="55.9" rx="1.9" ry="2.0" fill="#141414"/><ellipse cx="66.5" cy="18.1" rx="1.6" ry="1.2" fill="#141414"/><ellipse cx="41.5" cy="11.8" rx="1.8" ry="2.0" fill="#141414"/><ellipse cx="48.2" cy="29.1" rx="1.9" ry="1.4" fill="#141414"/><ellipse cx="66.6" cy="59.1" rx="1.6" ry="1.4" fill="#141414"/><ellipse cx="63.6" cy="75.6" rx="2.0" ry="1.5" fill="#141414"/><ellipse cx="55.9" cy="31.9" rx="1.5" ry="1.3" fill="#141414"/><ellipse cx="74.9" cy="42.3" rx="2.3" ry="1.2" fill="#141414"/><ellipse cx="42.8" cy="36.2" rx="1.7" ry="1.2" fill="#141414"/><ellipse cx="50.1" cy="45.3" rx="1.5" ry="1.5" fill="#141414"/><ellipse cx="76.1" cy="50.3" rx="2.3" ry="1.4" fill="#141414"/><ellipse cx="54.3" cy="48.3" rx="1.8" ry="1.7" fill="#141414"/><ellipse cx="66.3" cy="73.6" rx="1.7" ry="1.6" fill="#141414"/>
<ellipse cx="46" cy="52" rx="4" ry="3" fill="#101010"/>
<rect x="0" y="0" width="2" height="80" fill="#f0f0f0"/></g></svg></div><div class="lab"><svg class="tmic" width="14" height="15" viewBox="0 0 14 15"><rect x="4.6" y="1.2" width="5.6" height="10" rx="2.8" fill="#e9505a"/><rect x="4.8" y="12.3" width="5.4" height="1.6" fill="#e9505a"/><line x1="1.5" y1="13.8" x2="12.6" y2="1.6" stroke="#5a1414" stroke-width="2.6"/><line x1="1.5" y1="13.8" x2="12.6" y2="1.6" stroke="#f09aa0" stroke-width="1.1"/></svg><span class="ln">Уулбубу Камчыбеко...</span></div></div><div class="tile" style="left:364px;top:675px"><div class="bn">Дамира&nbsp; Молдо...</div><div class="lab lab0"><svg class="tmic" width="14" height="15" viewBox="0 0 14 15"><rect x="4.6" y="1.2" width="5.6" height="10" rx="2.8" fill="#e9505a"/><rect x="4.8" y="12.3" width="5.4" height="1.6" fill="#e9505a"/><line x1="1.5" y1="13.8" x2="12.6" y2="1.6" stroke="#5a1414" stroke-width="2.6"/><line x1="1.5" y1="13.8" x2="12.6" y2="1.6" stroke="#f09aa0" stroke-width="1.1"/></svg></div></div><div class="tile" style="left:594px;top:675px"><div class="av" style="background:#0b5aa5"><span style="font-size:44px">Г</span></div><div class="lab"><svg class="tmic" width="14" height="15" viewBox="0 0 14 15"><rect x="4.6" y="1.2" width="5.6" height="10" rx="2.8" fill="#e9505a"/><rect x="4.8" y="12.3" width="5.4" height="1.6" fill="#e9505a"/><line x1="1.5" y1="13.8" x2="12.6" y2="1.6" stroke="#5a1414" stroke-width="2.6"/><line x1="1.5" y1="13.8" x2="12.6" y2="1.6" stroke="#f09aa0" stroke-width="1.1"/></svg><span class="ln">Гулайда Калыкова</span></div></div><div class="tile" style="left:824px;top:675px"><div class="av ph"><svg width="80" height="80" viewBox="0 0 80 80" preserveAspectRatio="none"><defs><filter id="fb6" x="-10%" y="-10%" width="120%" height="120%"><feGaussianBlur stdDeviation="1.0"/></filter></defs><rect width="80" height="80" fill="#dcc4a4"/><g filter="url(#fb6)" transform="translate(-1.5 -1.5) scale(1.0375)"><rect width="80" height="80" fill="#dcc4a4"/>
<rect x="0" y="0" width="18" height="80" fill="#a81c26"/>
<path d="M8 0 L26 0 L22 40 L16 40 Z" fill="#e0c8a8"/>
<rect x="20" y="0" width="20" height="80" fill="#a81c26"/>
<path d="M36 0 L52 0 L46 40 L40 40 Z" fill="#e4cca8"/>
<circle cx="6" cy="30" r="14" fill="#e8c038"/><circle cx="6" cy="30" r="9" fill="#d09a30"/><path d="M0 28 L14 26 L10 36 Z" fill="#b86a28"/>
<circle cx="31" cy="28" r="13" fill="#e8c038"/><circle cx="31" cy="28" r="8.5" fill="#d09a30"/><path d="M24 26 L38 24 L34 34 Z" fill="#b86a28"/>
<path d="M46 0 L78 0 L80 80 L62 80 C58 60 52 40 46 22 Z" fill="#ececf0"/>
<path d="M60 0 L68 0 L70 30 L72 78 L66 78 C64 60 66 44 62 30 Z" fill="#3a86d0"/>
<path d="M54 4 L60 0 L62 8 Z" fill="#7a6aa0"/>
<rect x="72" y="60" width="8" height="20" fill="#d8d0c0"/>
<path d="M10 80 L12 50 C20 44 30 44 40 46 L56 50 L58 80 Z" fill="#2e2e32"/>
<ellipse cx="39" cy="47" rx="11" ry="13" fill="#1c1414"/>
<ellipse cx="40" cy="51" rx="7" ry="8.5" fill="#c89a8a"/>
<path d="M16 80 C18 66 28 60 40 60 C52 60 62 66 66 80 Z" fill="#1e1e3e"/>
<path d="M36 66 L44 66 L42 74 L38 74 Z" fill="#5a4a5a"/></g></svg></div><div class="lab"><svg class="tmic" width="14" height="15" viewBox="0 0 14 15"><rect x="4.6" y="1.2" width="5.6" height="10" rx="2.8" fill="#e9505a"/><rect x="4.8" y="12.3" width="5.4" height="1.6" fill="#e9505a"/><line x1="1.5" y1="13.8" x2="12.6" y2="1.6" stroke="#5a1414" stroke-width="2.6"/><line x1="1.5" y1="13.8" x2="12.6" y2="1.6" stroke="#f09aa0" stroke-width="1.1"/></svg><span class="ln">Yorkinoy Ruzieva</span></div></div><div class="tile" style="left:1054px;top:675px"><div class="av ph"><svg width="80" height="80" viewBox="0 0 80 80" preserveAspectRatio="none"><defs><filter id="fb7" x="-10%" y="-10%" width="120%" height="120%"><feGaussianBlur stdDeviation="1.0"/></filter></defs><rect width="80" height="80" fill="#e9e7e2"/><g filter="url(#fb7)" transform="translate(-1.5 -1.5) scale(1.0375)"><rect width="80" height="80" fill="#e9e7e2"/>
<rect x="0" y="0" width="12" height="80" fill="#efedea"/>
<rect x="62" y="0" width="18" height="80" fill="#e2e1de"/>
<path d="M4 80 L6 76 L24 76 L26 70 L46 70 L48 64 L80 56 L80 80 Z" fill="#b48c64"/>
<path d="M6 78 L26 78 L28 72 L48 72 L50 66 L80 60 L80 64 L52 70 L50 76 L28 76 L26 80 L6 80 Z" fill="#d8bc94"/>
<line x1="54" y1="32" x2="80" y2="20" stroke="#a8a8a8" stroke-width="1.2"/>
<line x1="64" y1="28" x2="64" y2="80" stroke="#b4b4b4" stroke-width="1"/>
<line x1="50" y1="56" x2="80" y2="78" stroke="#8a8a8a" stroke-width="1.6"/>
<rect x="78" y="8" width="2" height="48" fill="#9a9a9a"/>
<ellipse cx="41" cy="16" rx="8.5" ry="10.5" fill="#241c1c"/>
<ellipse cx="42.5" cy="18.5" rx="5" ry="6.5" fill="#c49a84"/>
<path d="M22 80 L20 62 L24 56 L52 56 L54 64 L50 76 L48 80 Z" fill="#22227a"/>
<path d="M20 60 C21 44 24 32 30 25 C36 22 46 22 54 26 C57 36 58 46 56 58 C48 60 34 62 20 60 Z" fill="#aea48e"/>
<circle cx="30" cy="36" r="3" fill="#c89aa0"/><circle cx="44" cy="42" r="3" fill="#98a880"/><circle cx="36" cy="50" r="2.5" fill="#d0a0a8"/><circle cx="50" cy="34" r="2.5" fill="#a0b090"/><circle cx="26" cy="52" r="2.5" fill="#9aa8b8"/>
<path d="M44 24 L54 24 L46 34 Z" fill="#2a2a90"/>
<path d="M30 80 L32 76 L44 76 L42 80 Z" fill="#c8a080"/></g></svg></div><div class="lab"><svg class="tmic" width="14" height="15" viewBox="0 0 14 15"><rect x="4.6" y="1.2" width="5.6" height="10" rx="2.8" fill="#e9505a"/><rect x="4.8" y="12.3" width="5.4" height="1.6" fill="#e9505a"/><line x1="1.5" y1="13.8" x2="12.6" y2="1.6" stroke="#5a1414" stroke-width="2.6"/><line x1="1.5" y1="13.8" x2="12.6" y2="1.6" stroke="#f09aa0" stroke-width="1.1"/></svg><span class="ln">Махабат Куканова</span></div></div><div class="tile" style="left:1284px;top:675px"><div class="bn">Юлия&nbsp; Фомина</div></div>
<div class="panel">
<div class="search"><svg width="14" height="14" viewBox="0 0 14 14"><circle cx="6" cy="6" r="4.6" fill="none" stroke="#6e6e78" stroke-width="1.2"/><line x1="9.4" y1="9.4" x2="12.8" y2="12.8" stroke="#6e6e78" stroke-width="1.2"/></svg><span>Найти участника</span></div>
<div class="list"><div class="prow" style="top:60px"><div class="pav" style="background:#f0a01a;"><span style="font-size:15px;font-weight:bold">И</span></div><div class="pname" style="letter-spacing:-0.1px">ИФОМК_105 (Я)</div><div class="ic" style="left:261px"><svg width="16" height="16" viewBox="0 0 16 16"><path d="M5.1 9.2 V4 A2.45 2.45 0 0 1 10 4 V4.6" fill="none" stroke="#d9606a" stroke-width="1.1"/><path d="M10 8.3 V9.2 A2.3 2.3 0 0 1 8.2 11.4" fill="none" stroke="#d9606a" stroke-width="1.1"/><path d="M3.3 8.3 A4.6 4 0 0 0 12.5 8.3" fill="none" stroke="#d9606a" stroke-width="1.1"/><line x1="8" y1="12.3" x2="8" y2="14.6" stroke="#d9606a" stroke-width="1.1"/><line x1="5.7" y1="15.1" x2="10.2" y2="15.1" stroke="#d9606a" stroke-width="1.2"/><line x1="0.1" y1="16" x2="15.4" y2="0.7" stroke="#9e3c46" stroke-width="1.1"/></svg></div></div><div class="prow" style="top:101px"><div class="pav pimg"><svg width="25" height="25" viewBox="0 0 25 25"><defs><filter id="fb10" x="-10%" y="-10%" width="120%" height="120%"><feGaussianBlur stdDeviation="0.3"/></filter></defs><g filter="url(#fb10)"><rect width="25" height="25" fill="#1676c6"/><path d="M7 14 C10 10 15 9 18 10 C17 6 18 4 19 4 C21 5 20 8 19 11 C17 14 12 15 7 14 Z" fill="#cfe4f6"/><rect x="3" y="17" width="19" height="1.3" fill="#bcd8f0"/><rect x="5" y="19.5" width="15" height="1.2" fill="#bcd8f0"/></g></svg></div><div class="pname" style="letter-spacing:-0.2px">Акмуллинск...&nbsp; (Организатор)</div><div class="ic" style="left:214px;top:7px"><svg width="14" height="14" viewBox="0 0 14 14"><circle cx="7" cy="7" r="5.6" fill="none" stroke="#77777f" stroke-width="1"/><circle cx="7" cy="7" r="1.6" fill="#e0323d"/></svg></div><div class="ic" style="left:237px"><svg width="16" height="16" viewBox="0 0 16 16"><path d="M5.1 9.2 V4 A2.45 2.45 0 0 1 10 4 V4.6" fill="none" stroke="#d9606a" stroke-width="1.1"/><path d="M10 8.3 V9.2 A2.3 2.3 0 0 1 8.2 11.4" fill="none" stroke="#d9606a" stroke-width="1.1"/><path d="M3.3 8.3 A4.6 4 0 0 0 12.5 8.3" fill="none" stroke="#d9606a" stroke-width="1.1"/><line x1="8" y1="12.3" x2="8" y2="14.6" stroke="#d9606a" stroke-width="1.1"/><line x1="5.7" y1="15.1" x2="10.2" y2="15.1" stroke="#d9606a" stroke-width="1.2"/><line x1="0.1" y1="16" x2="15.4" y2="0.7" stroke="#9e3c46" stroke-width="1.1"/></svg></div><div class="ic" style="left:261px"><svg width="17" height="16" viewBox="0 0 17 16"><path d="M10.9 5.6 V5.2 Q10.9 4.1 9.8 4.1 H1.8 Q0.7 4.1 0.7 5.2 V11.6 Q0.7 12.4 1.4 12.8 M4.8 12.9 H9.8 Q10.9 12.9 10.9 11.8 V7.6 M11.2 7 L15.3 5 V12 L11.2 10" fill="none" stroke="#a8343f" stroke-width="1.25"/><line x1="0.2" y1="16" x2="15.6" y2="0.7" stroke="#9e3c46" stroke-width="1.1"/></svg></div></div><div class="prow" style="top:142px"><div class="pav pimg"><svg width="25" height="25" viewBox="0 0 25 25"><defs><filter id="fb11" x="-10%" y="-10%" width="120%" height="120%"><feGaussianBlur stdDeviation="0.3"/></filter></defs><g filter="url(#fb11)"><rect width="25" height="25" fill="#f4f4f4"/><rect x="0" y="0" width="5" height="25" fill="#e6e6ea"/><ellipse cx="12.5" cy="9.5" rx="7.5" ry="7" fill="#8e8a86"/><ellipse cx="12.5" cy="15" rx="5.6" ry="6" fill="#aa8c82"/><rect x="7.5" y="13" width="10" height="1" fill="#3a3030"/><rect x="8" y="13" width="4" height="2.5" fill="none" stroke="#3a3030" stroke-width="0.6"/><rect x="13" y="13" width="4" height="2.5" fill="none" stroke="#3a3030" stroke-width="0.6"/><path d="M2 25 C4 21.5 8 20.5 12.5 20.5 C17 20.5 21 21.5 24 25 Z" fill="#1e2236"/></g></svg></div><div class="pname" style="letter-spacing:-0.1px">Гузель Курбангалеева</div><div class="ic" style="left:213px;top:7px"><svg width="16" height="12" viewBox="0 0 16 12"><rect x="0" y="0" width="16" height="12" rx="2" fill="#1aa33a"/><path d="M8 2.2 L11 5.4 H9 V9.4 H7 V5.4 H5 Z" fill="#e6ffe9"/></svg></div><div class="ic" style="left:237px"><svg width="16" height="16" viewBox="0 0 16 16"><rect x="5.1" y="1.5" width="5.8" height="8.6" rx="2.9" fill="#6a6a72"/><path d="M6.3 3.3 Q8 1.6 9.7 3.3 Z" fill="#d8d8dc"/><path d="M3.4 8.7 A4.6 3.5 0 0 0 12.6 8.7" fill="none" stroke="#6a6a72" stroke-width="1.1"/><line x1="8" y1="12.2" x2="8" y2="15" stroke="#6a6a72" stroke-width="1.1"/><line x1="5.7" y1="15.6" x2="10.3" y2="15.6" stroke="#6a6a72" stroke-width="1.3"/></svg></div><div class="ic" style="left:261px"><svg width="17" height="16" viewBox="0 0 17 16"><rect x="0.8" y="4.2" width="10.2" height="8.35" rx="1.6" fill="none" stroke="#6a6a72" stroke-width="1.2"/><path d="M11 7.2 L15.2 5.1 V11.8 L11 9.7" fill="none" stroke="#6a6a72" stroke-width="1.2"/></svg></div></div><div class="prow" style="top:183px"><div class="pav pimg"><svg width="25" height="25" viewBox="0 0 25 25"><defs><filter id="fb12" x="-10%" y="-10%" width="120%" height="120%"><feGaussianBlur stdDeviation="0.3"/></filter></defs><g filter="url(#fb12)"><rect width="25" height="25" fill="#ccd8e4"/><path d="M0 5 L6 9 L12.5 16 L17 8 L25 3 L25 17 L0 17 Z" fill="#6c5c4a"/><path d="M0 8 L4 10 L10 16 L0 17 Z" fill="#4a4034"/><path d="M18 9 L25 6 L25 16 L15 16 Z" fill="#7a6a54"/><rect x="0" y="16" width="25" height="9" fill="#3c7a6c"/><rect x="10" y="16" width="5" height="9" fill="#7aaca4"/><rect x="0" y="21" width="25" height="4" fill="#2e6458"/></g></svg></div><div class="pname" style="letter-spacing:-0.17px">Aida Tounbaevna</div><div class="ic" style="left:237px"><svg width="16" height="16" viewBox="0 0 16 16"><path d="M5.1 9.2 V4 A2.45 2.45 0 0 1 10 4 V4.6" fill="none" stroke="#d9606a" stroke-width="1.1"/><path d="M10 8.3 V9.2 A2.3 2.3 0 0 1 8.2 11.4" fill="none" stroke="#d9606a" stroke-width="1.1"/><path d="M3.3 8.3 A4.6 4 0 0 0 12.5 8.3" fill="none" stroke="#d9606a" stroke-width="1.1"/><line x1="8" y1="12.3" x2="8" y2="14.6" stroke="#d9606a" stroke-width="1.1"/><line x1="5.7" y1="15.1" x2="10.2" y2="15.1" stroke="#d9606a" stroke-width="1.2"/><line x1="0.1" y1="16" x2="15.4" y2="0.7" stroke="#9e3c46" stroke-width="1.1"/></svg></div><div class="ic" style="left:261px"><svg width="17" height="16" viewBox="0 0 17 16"><path d="M10.9 5.6 V5.2 Q10.9 4.1 9.8 4.1 H1.8 Q0.7 4.1 0.7 5.2 V11.6 Q0.7 12.4 1.4 12.8 M4.8 12.9 H9.8 Q10.9 12.9 10.9 11.8 V7.6 M11.2 7 L15.3 5 V12 L11.2 10" fill="none" stroke="#a8343f" stroke-width="1.25"/><line x1="0.2" y1="16" x2="15.6" y2="0.7" stroke="#9e3c46" stroke-width="1.1"/></svg></div></div><div class="prow" style="top:224px"><div class="pav" style="background:#f2542a;"><span style="font-size:17.5px;font-weight:normal">A</span></div><div class="pname" style="letter-spacing:-0.17px">Ainura Esenalieva</div><div class="ic" style="left:237px"><svg width="16" height="16" viewBox="0 0 16 16"><path d="M5.1 9.2 V4 A2.45 2.45 0 0 1 10 4 V4.6" fill="none" stroke="#d9606a" stroke-width="1.1"/><path d="M10 8.3 V9.2 A2.3 2.3 0 0 1 8.2 11.4" fill="none" stroke="#d9606a" stroke-width="1.1"/><path d="M3.3 8.3 A4.6 4 0 0 0 12.5 8.3" fill="none" stroke="#d9606a" stroke-width="1.1"/><line x1="8" y1="12.3" x2="8" y2="14.6" stroke="#d9606a" stroke-width="1.1"/><line x1="5.7" y1="15.1" x2="10.2" y2="15.1" stroke="#d9606a" stroke-width="1.2"/><line x1="0.1" y1="16" x2="15.4" y2="0.7" stroke="#9e3c46" stroke-width="1.1"/></svg></div><div class="ic" style="left:261px"><svg width="17" height="16" viewBox="0 0 17 16"><path d="M10.9 5.6 V5.2 Q10.9 4.1 9.8 4.1 H1.8 Q0.7 4.1 0.7 5.2 V11.6 Q0.7 12.4 1.4 12.8 M4.8 12.9 H9.8 Q10.9 12.9 10.9 11.8 V7.6 M11.2 7 L15.3 5 V12 L11.2 10" fill="none" stroke="#a8343f" stroke-width="1.25"/><line x1="0.2" y1="16" x2="15.6" y2="0.7" stroke="#9e3c46" stroke-width="1.1"/></svg></div></div><div class="prow" style="top:265px"><div class="pav" style="background:#c3342f;"><span style="font-size:13.5px;font-weight:bold">BJ</span></div><div class="pname" style="letter-spacing:-0.17px">Baktigul Junushbaeva</div><div class="ic" style="left:237px"><svg width="16" height="16" viewBox="0 0 16 16"><path d="M5.1 9.2 V4 A2.45 2.45 0 0 1 10 4 V4.6" fill="none" stroke="#d9606a" stroke-width="1.1"/><path d="M10 8.3 V9.2 A2.3 2.3 0 0 1 8.2 11.4" fill="none" stroke="#d9606a" stroke-width="1.1"/><path d="M3.3 8.3 A4.6 4 0 0 0 12.5 8.3" fill="none" stroke="#d9606a" stroke-width="1.1"/><line x1="8" y1="12.3" x2="8" y2="14.6" stroke="#d9606a" stroke-width="1.1"/><line x1="5.7" y1="15.1" x2="10.2" y2="15.1" stroke="#d9606a" stroke-width="1.2"/><line x1="0.1" y1="16" x2="15.4" y2="0.7" stroke="#9e3c46" stroke-width="1.1"/></svg></div><div class="ic" style="left:261px"><svg width="17" height="16" viewBox="0 0 17 16"><path d="M10.9 5.6 V5.2 Q10.9 4.1 9.8 4.1 H1.8 Q0.7 4.1 0.7 5.2 V11.6 Q0.7 12.4 1.4 12.8 M4.8 12.9 H9.8 Q10.9 12.9 10.9 11.8 V7.6 M11.2 7 L15.3 5 V12 L11.2 10" fill="none" stroke="#a8343f" stroke-width="1.25"/><line x1="0.2" y1="16" x2="15.6" y2="0.7" stroke="#9e3c46" stroke-width="1.1"/></svg></div></div><div class="prow" style="top:306px"><div class="pav" style="background:#1f9e85;"><span style="font-size:13.5px;font-weight:bold">DO</span></div><div class="pname" style="letter-spacing:-0.17px">Damira Omur</div><div class="ic" style="left:237px"><svg width="16" height="16" viewBox="0 0 16 16"><path d="M5.1 9.2 V4 A2.45 2.45 0 0 1 10 4 V4.6" fill="none" stroke="#d9606a" stroke-width="1.1"/><path d="M10 8.3 V9.2 A2.3 2.3 0 0 1 8.2 11.4" fill="none" stroke="#d9606a" stroke-width="1.1"/><path d="M3.3 8.3 A4.6 4 0 0 0 12.5 8.3" fill="none" stroke="#d9606a" stroke-width="1.1"/><line x1="8" y1="12.3" x2="8" y2="14.6" stroke="#d9606a" stroke-width="1.1"/><line x1="5.7" y1="15.1" x2="10.2" y2="15.1" stroke="#d9606a" stroke-width="1.2"/><line x1="0.1" y1="16" x2="15.4" y2="0.7" stroke="#9e3c46" stroke-width="1.1"/></svg></div><div class="ic" style="left:261px"><svg width="17" height="16" viewBox="0 0 17 16"><rect x="0.8" y="4.2" width="10.2" height="8.35" rx="1.6" fill="none" stroke="#6a6a72" stroke-width="1.2"/><path d="M11 7.2 L15.2 5.1 V11.8 L11 9.7" fill="none" stroke="#6a6a72" stroke-width="1.2"/></svg></div></div><div class="prow" style="top:347px"><div class="pav" style="background:#1888d8;"><span style="font-size:17.5px;font-weight:normal">D</span></div><div class="pname" style="letter-spacing:-0.17px">Damira Syeralieva</div><div class="ic" style="left:237px"><svg width="16" height="16" viewBox="0 0 16 16"><path d="M5.1 9.2 V4 A2.45 2.45 0 0 1 10 4 V4.6" fill="none" stroke="#d9606a" stroke-width="1.1"/><path d="M10 8.3 V9.2 A2.3 2.3 0 0 1 8.2 11.4" fill="none" stroke="#d9606a" stroke-width="1.1"/><path d="M3.3 8.3 A4.6 4 0 0 0 12.5 8.3" fill="none" stroke="#d9606a" stroke-width="1.1"/><line x1="8" y1="12.3" x2="8" y2="14.6" stroke="#d9606a" stroke-width="1.1"/><line x1="5.7" y1="15.1" x2="10.2" y2="15.1" stroke="#d9606a" stroke-width="1.2"/><line x1="0.1" y1="16" x2="15.4" y2="0.7" stroke="#9e3c46" stroke-width="1.1"/></svg></div><div class="ic" style="left:261px"><svg width="17" height="16" viewBox="0 0 17 16"><path d="M10.9 5.6 V5.2 Q10.9 4.1 9.8 4.1 H1.8 Q0.7 4.1 0.7 5.2 V11.6 Q0.7 12.4 1.4 12.8 M4.8 12.9 H9.8 Q10.9 12.9 10.9 11.8 V7.6 M11.2 7 L15.3 5 V12 L11.2 10" fill="none" stroke="#a8343f" stroke-width="1.25"/><line x1="0.2" y1="16" x2="15.6" y2="0.7" stroke="#9e3c46" stroke-width="1.1"/></svg></div></div><div class="prow" style="top:388px"><div class="pav" style="background:#8e3fb0;"><span style="font-size:15px;font-weight:bold">D</span></div><div class="pname" style="letter-spacing:-0.17px">djamilya</div><div class="ic" style="left:237px"><svg width="16" height="16" viewBox="0 0 16 16"><path d="M5.1 9.2 V4 A2.45 2.45 0 0 1 10 4 V4.6" fill="none" stroke="#d9606a" stroke-width="1.1"/><path d="M10 8.3 V9.2 A2.3 2.3 0 0 1 8.2 11.4" fill="none" stroke="#d9606a" stroke-width="1.1"/><path d="M3.3 8.3 A4.6 4 0 0 0 12.5 8.3" fill="none" stroke="#d9606a" stroke-width="1.1"/><line x1="8" y1="12.3" x2="8" y2="14.6" stroke="#d9606a" stroke-width="1.1"/><line x1="5.7" y1="15.1" x2="10.2" y2="15.1" stroke="#d9606a" stroke-width="1.2"/><line x1="0.1" y1="16" x2="15.4" y2="0.7" stroke="#9e3c46" stroke-width="1.1"/></svg></div><div class="ic" style="left:261px"><svg width="17" height="16" viewBox="0 0 17 16"><path d="M10.9 5.6 V5.2 Q10.9 4.1 9.8 4.1 H1.8 Q0.7 4.1 0.7 5.2 V11.6 Q0.7 12.4 1.4 12.8 M4.8 12.9 H9.8 Q10.9 12.9 10.9 11.8 V7.6 M11.2 7 L15.3 5 V12 L11.2 10" fill="none" stroke="#a8343f" stroke-width="1.25"/><line x1="0.2" y1="16" x2="15.6" y2="0.7" stroke="#9e3c46" stroke-width="1.1"/></svg></div></div><div class="prow" style="top:429px"><div class="pav" style="background:#0e5aa6;"><span style="font-size:17.5px;font-weight:normal">E</span></div><div class="pname" style="letter-spacing:-0.17px">Elvira Almabaeva</div><div class="ic" style="left:237px"><svg width="16" height="16" viewBox="0 0 16 16"><path d="M5.1 9.2 V4 A2.45 2.45 0 0 1 10 4 V4.6" fill="none" stroke="#d9606a" stroke-width="1.1"/><path d="M10 8.3 V9.2 A2.3 2.3 0 0 1 8.2 11.4" fill="none" stroke="#d9606a" stroke-width="1.1"/><path d="M3.3 8.3 A4.6 4 0 0 0 12.5 8.3" fill="none" stroke="#d9606a" stroke-width="1.1"/><line x1="8" y1="12.3" x2="8" y2="14.6" stroke="#d9606a" stroke-width="1.1"/><line x1="5.7" y1="15.1" x2="10.2" y2="15.1" stroke="#d9606a" stroke-width="1.2"/><line x1="0.1" y1="16" x2="15.4" y2="0.7" stroke="#9e3c46" stroke-width="1.1"/></svg></div><div class="ic" style="left:261px"><svg width="17" height="16" viewBox="0 0 17 16"><path d="M10.9 5.6 V5.2 Q10.9 4.1 9.8 4.1 H1.8 Q0.7 4.1 0.7 5.2 V11.6 Q0.7 12.4 1.4 12.8 M4.8 12.9 H9.8 Q10.9 12.9 10.9 11.8 V7.6 M11.2 7 L15.3 5 V12 L11.2 10" fill="none" stroke="#a8343f" stroke-width="1.25"/><line x1="0.2" y1="16" x2="15.6" y2="0.7" stroke="#9e3c46" stroke-width="1.1"/></svg></div></div><div class="prow" style="top:470px"><div class="pav" style="background:#14999a;"><span style="font-size:17.5px;font-weight:normal">F</span></div><div class="pname" style="letter-spacing:-0.17px">Fatima Amanalieva</div><div class="ic" style="left:237px"><svg width="16" height="16" viewBox="0 0 16 16"><path d="M5.1 9.2 V4 A2.45 2.45 0 0 1 10 4 V4.6" fill="none" stroke="#d9606a" stroke-width="1.1"/><path d="M10 8.3 V9.2 A2.3 2.3 0 0 1 8.2 11.4" fill="none" stroke="#d9606a" stroke-width="1.1"/><path d="M3.3 8.3 A4.6 4 0 0 0 12.5 8.3" fill="none" stroke="#d9606a" stroke-width="1.1"/><line x1="8" y1="12.3" x2="8" y2="14.6" stroke="#d9606a" stroke-width="1.1"/><line x1="5.7" y1="15.1" x2="10.2" y2="15.1" stroke="#d9606a" stroke-width="1.2"/><line x1="0.1" y1="16" x2="15.4" y2="0.7" stroke="#9e3c46" stroke-width="1.1"/></svg></div><div class="ic" style="left:261px"><svg width="17" height="16" viewBox="0 0 17 16"><path d="M10.9 5.6 V5.2 Q10.9 4.1 9.8 4.1 H1.8 Q0.7 4.1 0.7 5.2 V11.6 Q0.7 12.4 1.4 12.8 M4.8 12.9 H9.8 Q10.9 12.9 10.9 11.8 V7.6 M11.2 7 L15.3 5 V12 L11.2 10" fill="none" stroke="#a8343f" stroke-width="1.25"/><line x1="0.2" y1="16" x2="15.6" y2="0.7" stroke="#9e3c46" stroke-width="1.1"/></svg></div></div><div class="prow" style="top:511px"><div class="pav" style="background:#8e3fb0;"><span style="font-size:15px;font-weight:bold;font-family:'Liberation Serif',serif">I</span></div><div class="pname" style="letter-spacing:-0.17px">iPhone</div><div class="ic" style="left:237px"><svg width="16" height="16" viewBox="0 0 16 16"><path d="M5.1 9.2 V4 A2.45 2.45 0 0 1 10 4 V4.6" fill="none" stroke="#d9606a" stroke-width="1.1"/><path d="M10 8.3 V9.2 A2.3 2.3 0 0 1 8.2 11.4" fill="none" stroke="#d9606a" stroke-width="1.1"/><path d="M3.3 8.3 A4.6 4 0 0 0 12.5 8.3" fill="none" stroke="#d9606a" stroke-width="1.1"/><line x1="8" y1="12.3" x2="8" y2="14.6" stroke="#d9606a" stroke-width="1.1"/><line x1="5.7" y1="15.1" x2="10.2" y2="15.1" stroke="#d9606a" stroke-width="1.2"/><line x1="0.1" y1="16" x2="15.4" y2="0.7" stroke="#9e3c46" stroke-width="1.1"/></svg></div><div class="ic" style="left:261px"><svg width="17" height="16" viewBox="0 0 17 16"><path d="M10.9 5.6 V5.2 Q10.9 4.1 9.8 4.1 H1.8 Q0.7 4.1 0.7 5.2 V11.6 Q0.7 12.4 1.4 12.8 M4.8 12.9 H9.8 Q10.9 12.9 10.9 11.8 V7.6 M11.2 7 L15.3 5 V12 L11.2 10" fill="none" stroke="#a8343f" stroke-width="1.25"/><line x1="0.2" y1="16" x2="15.6" y2="0.7" stroke="#9e3c46" stroke-width="1.1"/></svg></div></div><div class="prow" style="top:552px"><div class="pav pimg"><svg width="25" height="25" viewBox="0 0 25 25"><defs><filter id="fb13" x="-10%" y="-10%" width="120%" height="120%"><feGaussianBlur stdDeviation="0.3"/></filter></defs><g filter="url(#fb13)"><rect width="25" height="25" fill="#a4c4fb"/><circle cx="12.5" cy="9.5" r="4.6" fill="#4a7be0"/><path d="M4.5 25 V20 C4.5 15 20.5 15 20.5 20 V25 Z" fill="#4a7be0"/></g></svg></div><div class="pname" style="letter-spacing:-0.17px">kokul58@mail.ru</div><div class="ic" style="left:237px"><svg width="16" height="16" viewBox="0 0 16 16"><path d="M5.1 9.2 V4 A2.45 2.45 0 0 1 10 4 V4.6" fill="none" stroke="#d9606a" stroke-width="1.1"/><path d="M10 8.3 V9.2 A2.3 2.3 0 0 1 8.2 11.4" fill="none" stroke="#d9606a" stroke-width="1.1"/><path d="M3.3 8.3 A4.6 4 0 0 0 12.5 8.3" fill="none" stroke="#d9606a" stroke-width="1.1"/><line x1="8" y1="12.3" x2="8" y2="14.6" stroke="#d9606a" stroke-width="1.1"/><line x1="5.7" y1="15.1" x2="10.2" y2="15.1" stroke="#d9606a" stroke-width="1.2"/><line x1="0.1" y1="16" x2="15.4" y2="0.7" stroke="#9e3c46" stroke-width="1.1"/></svg></div><div class="ic" style="left:261px"><svg width="17" height="16" viewBox="0 0 17 16"><path d="M10.9 5.6 V5.2 Q10.9 4.1 9.8 4.1 H1.8 Q0.7 4.1 0.7 5.2 V11.6 Q0.7 12.4 1.4 12.8 M4.8 12.9 H9.8 Q10.9 12.9 10.9 11.8 V7.6 M11.2 7 L15.3 5 V12 L11.2 10" fill="none" stroke="#a8343f" stroke-width="1.25"/><line x1="0.2" y1="16" x2="15.6" y2="0.7" stroke="#9e3c46" stroke-width="1.1"/></svg></div></div><div class="prow" style="top:593px"><div class="pav" style="background:#1f9e85;"><span style="font-size:15px;font-weight:bold">R</span></div><div class="pname" style="letter-spacing:-0.17px">Redmi</div><div class="ic" style="left:237px"><svg width="16" height="16" viewBox="0 0 16 16"><path d="M5.1 9.2 V4 A2.45 2.45 0 0 1 10 4 V4.6" fill="none" stroke="#d9606a" stroke-width="1.1"/><path d="M10 8.3 V9.2 A2.3 2.3 0 0 1 8.2 11.4" fill="none" stroke="#d9606a" stroke-width="1.1"/><path d="M3.3 8.3 A4.6 4 0 0 0 12.5 8.3" fill="none" stroke="#d9606a" stroke-width="1.1"/><line x1="8" y1="12.3" x2="8" y2="14.6" stroke="#d9606a" stroke-width="1.1"/><line x1="5.7" y1="15.1" x2="10.2" y2="15.1" stroke="#d9606a" stroke-width="1.2"/><line x1="0.1" y1="16" x2="15.4" y2="0.7" stroke="#9e3c46" stroke-width="1.1"/></svg></div><div class="ic" style="left:261px"><svg width="17" height="16" viewBox="0 0 17 16"><path d="M10.9 5.6 V5.2 Q10.9 4.1 9.8 4.1 H1.8 Q0.7 4.1 0.7 5.2 V11.6 Q0.7 12.4 1.4 12.8 M4.8 12.9 H9.8 Q10.9 12.9 10.9 11.8 V7.6 M11.2 7 L15.3 5 V12 L11.2 10" fill="none" stroke="#a8343f" stroke-width="1.25"/><line x1="0.2" y1="16" x2="15.6" y2="0.7" stroke="#9e3c46" stroke-width="1.1"/></svg></div></div><div class="prow" style="top:634px"><div class="pav" style="background:#5534a8;"><span style="font-size:17.5px;font-weight:normal">S</span></div><div class="pname" style="letter-spacing:-0.17px">Saltanat Beyshenbekovna</div><div class="ic" style="left:237px"><svg width="16" height="16" viewBox="0 0 16 16"><path d="M5.1 9.2 V4 A2.45 2.45 0 0 1 10 4 V4.6" fill="none" stroke="#d9606a" stroke-width="1.1"/><path d="M10 8.3 V9.2 A2.3 2.3 0 0 1 8.2 11.4" fill="none" stroke="#d9606a" stroke-width="1.1"/><path d="M3.3 8.3 A4.6 4 0 0 0 12.5 8.3" fill="none" stroke="#d9606a" stroke-width="1.1"/><line x1="8" y1="12.3" x2="8" y2="14.6" stroke="#d9606a" stroke-width="1.1"/><line x1="5.7" y1="15.1" x2="10.2" y2="15.1" stroke="#d9606a" stroke-width="1.2"/><line x1="0.1" y1="16" x2="15.4" y2="0.7" stroke="#9e3c46" stroke-width="1.1"/></svg></div><div class="ic" style="left:261px"><svg width="17" height="16" viewBox="0 0 17 16"><rect x="0.8" y="4.2" width="10.2" height="8.35" rx="1.6" fill="none" stroke="#6a6a72" stroke-width="1.2"/><path d="M11 7.2 L15.2 5.1 V11.8 L11 9.7" fill="none" stroke="#6a6a72" stroke-width="1.2"/></svg></div></div><div class="prow" style="top:675px"><div class="pav pimg"><svg width="25" height="25" viewBox="0 0 25 25"><defs><filter id="fb14" x="-10%" y="-10%" width="120%" height="120%"><feGaussianBlur stdDeviation="0.3"/></filter></defs><g filter="url(#fb14)"><rect width="25" height="25" fill="#d8c4a8"/><rect x="0" y="0" width="6" height="25" fill="#a82028"/><rect x="7" y="0" width="6" height="25" fill="#a82028"/><circle cx="3" cy="8" r="4" fill="#dcb030"/><circle cx="10" cy="8" r="3.5" fill="#dcb030"/><rect x="15" y="0" width="10" height="25" fill="#e4e4ea"/><rect x="19" y="0" width="3" height="22" fill="#3a86d0"/><path d="M3 25 C5 19 9 17 13 17 C17 17 21 19 23 25 Z" fill="#1e1e38"/><ellipse cx="13" cy="14" rx="4" ry="5" fill="#201818"/><ellipse cx="13" cy="15" rx="2.8" ry="3.5" fill="#c4a090"/></g></svg></div><div class="pname" style="letter-spacing:-0.17px">Yorkinoy Ruzieva</div><div class="ic" style="left:237px"><svg width="16" height="16" viewBox="0 0 16 16"><path d="M5.1 9.2 V4 A2.45 2.45 0 0 1 10 4 V4.6" fill="none" stroke="#d9606a" stroke-width="1.1"/><path d="M10 8.3 V9.2 A2.3 2.3 0 0 1 8.2 11.4" fill="none" stroke="#d9606a" stroke-width="1.1"/><path d="M3.3 8.3 A4.6 4 0 0 0 12.5 8.3" fill="none" stroke="#d9606a" stroke-width="1.1"/><line x1="8" y1="12.3" x2="8" y2="14.6" stroke="#d9606a" stroke-width="1.1"/><line x1="5.7" y1="15.1" x2="10.2" y2="15.1" stroke="#d9606a" stroke-width="1.2"/><line x1="0.1" y1="16" x2="15.4" y2="0.7" stroke="#9e3c46" stroke-width="1.1"/></svg></div><div class="ic" style="left:261px"><svg width="17" height="16" viewBox="0 0 17 16"><path d="M10.9 5.6 V5.2 Q10.9 4.1 9.8 4.1 H1.8 Q0.7 4.1 0.7 5.2 V11.6 Q0.7 12.4 1.4 12.8 M4.8 12.9 H9.8 Q10.9 12.9 10.9 11.8 V7.6 M11.2 7 L15.3 5 V12 L11.2 10" fill="none" stroke="#a8343f" stroke-width="1.25"/><line x1="0.2" y1="16" x2="15.6" y2="0.7" stroke="#9e3c46" stroke-width="1.1"/></svg></div></div><div class="prow" style="top:716px"><div class="pav" style="background:#1f9e85;"><span style="font-size:15px;font-weight:bold">A</span></div><div class="pname" style="letter-spacing:-0.1px">Адигинеева Арзыкан</div><div class="ic" style="left:237px"><svg width="16" height="16" viewBox="0 0 16 16"><path d="M5.1 9.2 V4 A2.45 2.45 0 0 1 10 4 V4.6" fill="none" stroke="#d9606a" stroke-width="1.1"/><path d="M10 8.3 V9.2 A2.3 2.3 0 0 1 8.2 11.4" fill="none" stroke="#d9606a" stroke-width="1.1"/><path d="M3.3 8.3 A4.6 4 0 0 0 12.5 8.3" fill="none" stroke="#d9606a" stroke-width="1.1"/><line x1="8" y1="12.3" x2="8" y2="14.6" stroke="#d9606a" stroke-width="1.1"/><line x1="5.7" y1="15.1" x2="10.2" y2="15.1" stroke="#d9606a" stroke-width="1.2"/><line x1="0.1" y1="16" x2="15.4" y2="0.7" stroke="#9e3c46" stroke-width="1.1"/></svg></div><div class="ic" style="left:261px"><svg width="17" height="16" viewBox="0 0 17 16"><rect x="0.8" y="4.2" width="10.2" height="8.35" rx="1.6" fill="none" stroke="#6a6a72" stroke-width="1.2"/><path d="M11 7.2 L15.2 5.1 V11.8 L11 9.7" fill="none" stroke="#6a6a72" stroke-width="1.2"/></svg></div></div><div class="prow" style="top:757px"><div class="pav" style="background:#e0580e;"><span style="font-size:15px;font-weight:bold">A</span></div><div class="pname" style="letter-spacing:-0.1px">Аида Абдыкерим кызы</div><div class="ic" style="left:237px"><svg width="16" height="16" viewBox="0 0 16 16"><path d="M5.1 9.2 V4 A2.45 2.45 0 0 1 10 4 V4.6" fill="none" stroke="#d9606a" stroke-width="1.1"/><path d="M10 8.3 V9.2 A2.3 2.3 0 0 1 8.2 11.4" fill="none" stroke="#d9606a" stroke-width="1.1"/><path d="M3.3 8.3 A4.6 4 0 0 0 12.5 8.3" fill="none" stroke="#d9606a" stroke-width="1.1"/><line x1="8" y1="12.3" x2="8" y2="14.6" stroke="#d9606a" stroke-width="1.1"/><line x1="5.7" y1="15.1" x2="10.2" y2="15.1" stroke="#d9606a" stroke-width="1.2"/><line x1="0.1" y1="16" x2="15.4" y2="0.7" stroke="#9e3c46" stroke-width="1.1"/></svg></div><div class="ic" style="left:261px"><svg width="17" height="16" viewBox="0 0 17 16"><path d="M10.9 5.6 V5.2 Q10.9 4.1 9.8 4.1 H1.8 Q0.7 4.1 0.7 5.2 V11.6 Q0.7 12.4 1.4 12.8 M4.8 12.9 H9.8 Q10.9 12.9 10.9 11.8 V7.6 M11.2 7 L15.3 5 V12 L11.2 10" fill="none" stroke="#a8343f" stroke-width="1.25"/><line x1="0.2" y1="16" x2="15.6" y2="0.7" stroke="#9e3c46" stroke-width="1.1"/></svg></div></div><div class="prow" style="top:798px"><div class="pav" style="background:#1f9e85;"><span style="font-size:15px;font-weight:bold">A</span></div><div class="pname" style="letter-spacing:-0.1px">Алиева Рахиля</div><div class="ic" style="left:237px"><svg width="16" height="16" viewBox="0 0 16 16"><path d="M5.1 9.2 V4 A2.45 2.45 0 0 1 10 4 V4.6" fill="none" stroke="#d9606a" stroke-width="1.1"/><path d="M10 8.3 V9.2 A2.3 2.3 0 0 1 8.2 11.4" fill="none" stroke="#d9606a" stroke-width="1.1"/><path d="M3.3 8.3 A4.6 4 0 0 0 12.5 8.3" fill="none" stroke="#d9606a" stroke-width="1.1"/><line x1="8" y1="12.3" x2="8" y2="14.6" stroke="#d9606a" stroke-width="1.1"/><line x1="5.7" y1="15.1" x2="10.2" y2="15.1" stroke="#d9606a" stroke-width="1.2"/><line x1="0.1" y1="16" x2="15.4" y2="0.7" stroke="#9e3c46" stroke-width="1.1"/></svg></div><div class="ic" style="left:261px"><svg width="17" height="16" viewBox="0 0 17 16"><path d="M10.9 5.6 V5.2 Q10.9 4.1 9.8 4.1 H1.8 Q0.7 4.1 0.7 5.2 V11.6 Q0.7 12.4 1.4 12.8 M4.8 12.9 H9.8 Q10.9 12.9 10.9 11.8 V7.6 M11.2 7 L15.3 5 V12 L11.2 10" fill="none" stroke="#a8343f" stroke-width="1.25"/><line x1="0.2" y1="16" x2="15.6" y2="0.7" stroke="#9e3c46" stroke-width="1.1"/></svg></div></div><div class="prow" style="top:839px"><div class="pav" style="background:#2d4a6a;"><span style="font-size:15px;font-weight:bold">A</span></div><div class="pname" style="letter-spacing:-0.1px">Алмагуль</div><div class="ic" style="left:237px"><svg width="16" height="16" viewBox="0 0 16 16"><path d="M5.1 9.2 V4 A2.45 2.45 0 0 1 10 4 V4.6" fill="none" stroke="#d9606a" stroke-width="1.1"/><path d="M10 8.3 V9.2 A2.3 2.3 0 0 1 8.2 11.4" fill="none" stroke="#d9606a" stroke-width="1.1"/><path d="M3.3 8.3 A4.6 4 0 0 0 12.5 8.3" fill="none" stroke="#d9606a" stroke-width="1.1"/><line x1="8" y1="12.3" x2="8" y2="14.6" stroke="#d9606a" stroke-width="1.1"/><line x1="5.7" y1="15.1" x2="10.2" y2="15.1" stroke="#d9606a" stroke-width="1.2"/><line x1="0.1" y1="16" x2="15.4" y2="0.7" stroke="#9e3c46" stroke-width="1.1"/></svg></div><div class="ic" style="left:261px"><svg width="17" height="16" viewBox="0 0 17 16"><rect x="0.8" y="4.2" width="10.2" height="8.35" rx="1.6" fill="none" stroke="#6a6a72" stroke-width="1.2"/><path d="M11 7.2 L15.2 5.1 V11.8 L11 9.7" fill="none" stroke="#6a6a72" stroke-width="1.2"/></svg></div></div><div class="prow" style="top:880px"><div class="pav pimg"><svg width="25" height="25" viewBox="0 0 25 25"><defs><filter id="fb15" x="-10%" y="-10%" width="120%" height="120%"><feGaussianBlur stdDeviation="0.3"/></filter></defs><g filter="url(#fb15)"><rect width="25" height="25" fill="#b0d4cc"/><path d="M5 25 C4 18 6 14 6 10 C6 4 10 1 13 1 C17 1 20 4 20 10 C20 14 22 18 22 25 Z" fill="#8a4a50"/><ellipse cx="13.5" cy="12" rx="5" ry="7" fill="#e6cccc"/><path d="M2 25 C4 22 7 21 10 21 L17 21 C20 21 23 22 24 25 Z" fill="#ead8d8"/></g></svg></div><div class="pname" style="letter-spacing:-0.1px">Альбина Жалилова</div><div class="ic" style="left:237px"><svg width="16" height="16" viewBox="0 0 16 16"><path d="M5.1 9.2 V4 A2.45 2.45 0 0 1 10 4 V4.6" fill="none" stroke="#d9606a" stroke-width="1.1"/><path d="M10 8.3 V9.2 A2.3 2.3 0 0 1 8.2 11.4" fill="none" stroke="#d9606a" stroke-width="1.1"/><path d="M3.3 8.3 A4.6 4 0 0 0 12.5 8.3" fill="none" stroke="#d9606a" stroke-width="1.1"/><line x1="8" y1="12.3" x2="8" y2="14.6" stroke="#d9606a" stroke-width="1.1"/><line x1="5.7" y1="15.1" x2="10.2" y2="15.1" stroke="#d9606a" stroke-width="1.2"/><line x1="0.1" y1="16" x2="15.4" y2="0.7" stroke="#9e3c46" stroke-width="1.1"/></svg></div><div class="ic" style="left:261px"><svg width="17" height="16" viewBox="0 0 17 16"><path d="M10.9 5.6 V5.2 Q10.9 4.1 9.8 4.1 H1.8 Q0.7 4.1 0.7 5.2 V11.6 Q0.7 12.4 1.4 12.8 M4.8 12.9 H9.8 Q10.9 12.9 10.9 11.8 V7.6 M11.2 7 L15.3 5 V12 L11.2 10" fill="none" stroke="#a8343f" stroke-width="1.25"/><line x1="0.2" y1="16" x2="15.6" y2="0.7" stroke="#9e3c46" stroke-width="1.1"/></svg></div></div><div class="prow" style="top:921px"><div class="pav" style="background:#e0580e;"><span style="font-size:15px;font-weight:bold">A</span></div><div class="pname" style="letter-spacing:-0.1px"></div><div class="ic" style="left:237px"><svg width="16" height="16" viewBox="0 0 16 16"><path d="M5.1 9.2 V4 A2.45 2.45 0 0 1 10 4 V4.6" fill="none" stroke="#d9606a" stroke-width="1.1"/><path d="M10 8.3 V9.2 A2.3 2.3 0 0 1 8.2 11.4" fill="none" stroke="#d9606a" stroke-width="1.1"/><path d="M3.3 8.3 A4.6 4 0 0 0 12.5 8.3" fill="none" stroke="#d9606a" stroke-width="1.1"/><line x1="8" y1="12.3" x2="8" y2="14.6" stroke="#d9606a" stroke-width="1.1"/><line x1="5.7" y1="15.1" x2="10.2" y2="15.1" stroke="#d9606a" stroke-width="1.2"/><line x1="0.1" y1="16" x2="15.4" y2="0.7" stroke="#9e3c46" stroke-width="1.1"/></svg></div><div class="ic" style="left:261px"><svg width="17" height="16" viewBox="0 0 17 16"><path d="M10.9 5.6 V5.2 Q10.9 4.1 9.8 4.1 H1.8 Q0.7 4.1 0.7 5.2 V11.6 Q0.7 12.4 1.4 12.8 M4.8 12.9 H9.8 Q10.9 12.9 10.9 11.8 V7.6 M11.2 7 L15.3 5 V12 L11.2 10" fill="none" stroke="#a8343f" stroke-width="1.25"/><line x1="0.2" y1="16" x2="15.6" y2="0.7" stroke="#9e3c46" stroke-width="1.1"/></svg></div></div></div>
</div>
<div class="sbtrack"></div><div class="sbar"></div>
</body></html>
